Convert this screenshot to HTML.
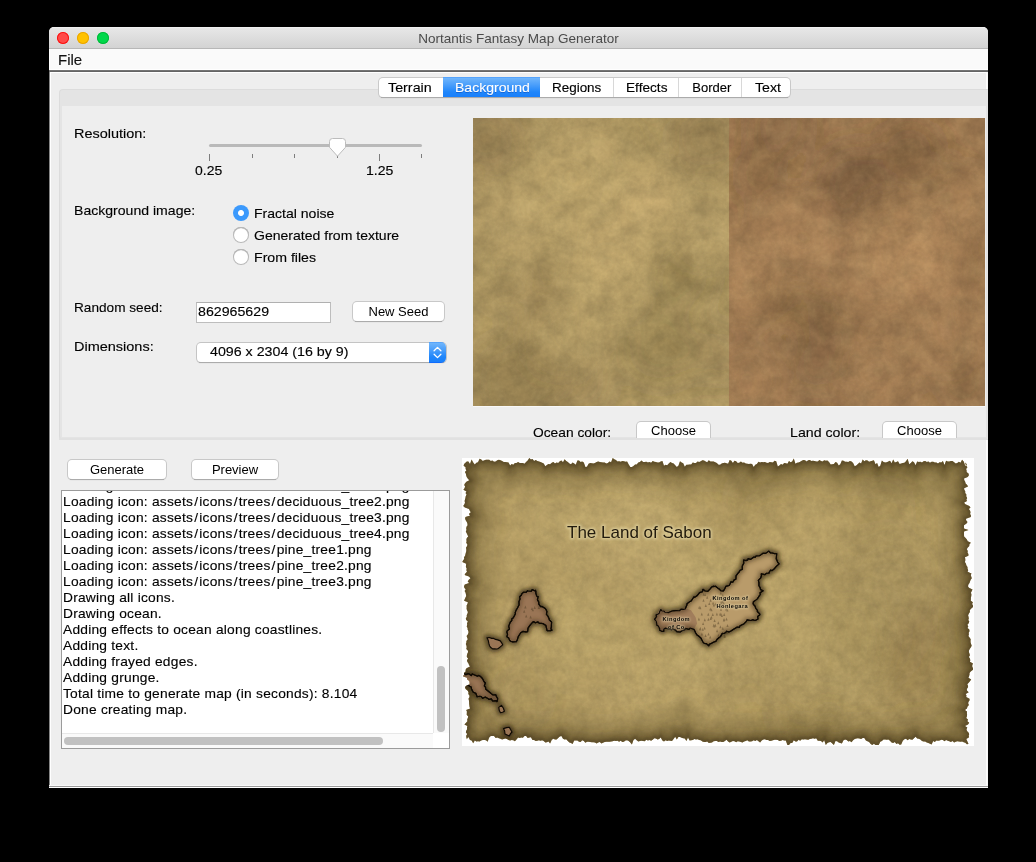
<!DOCTYPE html>
<html><head><meta charset="utf-8"><title>Nortantis Fantasy Map Generator</title>
<style>
*{margin:0;padding:0;box-sizing:border-box}
html,body{width:1036px;height:862px;background:#000;overflow:hidden}
body{font-family:"Liberation Sans",sans-serif;font-size:13px;color:#000;position:relative}
.lbl,.tab,#file,.ln{-webkit-text-stroke:0.13px currentColor}
.btn,.tab,#title,#file,.lbl,#logtxt{will-change:transform}
.abs{position:absolute}
#win{position:absolute;left:49px;top:27px;width:939px;height:761px;background:#eeeeee;border-radius:5px 5px 0 0;overflow:hidden}
#titlebar{position:absolute;left:0;top:0;width:939px;height:22px;background:linear-gradient(#f6f6f6 0,#e9e9e9 1px,#e6e6e6 2px,#d3d3d3 21px);border-bottom:1px solid #b7b7b7}
#title{position:absolute;left:0;width:939px;top:4px;text-align:center;font-size:13px;line-height:16px;color:#4a4a4a}
.tl{position:absolute;top:5px;width:12px;height:12px;border-radius:50%}
#menubar{position:absolute;left:0;top:22px;width:939px;height:21px;background:#fafafa;border-left:1px solid #fff;border-bottom:1px solid #fff}
#file{position:absolute;left:8px;top:2px;font-size:14px;line-height:18px;color:#111;transform:scaleX(1.07);transform-origin:0 0}
#sep{position:absolute;left:0;top:43px;width:939px;height:2px;background:linear-gradient(#7c7c7c,#5c5c5c)}
#content{position:absolute;left:0;top:45px;width:939px;height:716px;background:#eeeeee;border-left:1px solid #858585}
#hl-top{position:absolute;left:1px;top:45px;width:938px;height:1px;background:#fff}
#hl-left{position:absolute;left:1px;top:45px;width:1px;height:716px;background:#fff}
#hl-right{position:absolute;left:937px;top:45px;width:2px;height:716px;background:linear-gradient(90deg,#fff,#f4f4f4)}
#bot1{position:absolute;left:0;top:758px;width:939px;height:1px;background:#f8f8f8}
#bot2{position:absolute;left:0;top:759px;width:939px;height:1px;background:#9a9a9a}
#bot3{position:absolute;left:0;top:760px;width:939px;height:1px;background:#fff}
/* tabbed pane */
#pane{position:absolute;left:10px;top:62px;width:930px;height:351px;background:#e4e4e4;border:1px solid #dcdcdc;border-radius:4px 0 0 4px;border-right:none}
#inner{position:absolute;left:13px;top:79px;width:924px;height:331px;background:#eeeeee}
#tabs{position:absolute;left:330px;top:51px;height:19px;width:411px;background:#fff;border-radius:4px;box-shadow:0 0 0 1px #c9c9c9,0 1px 1px 0 #b0b0b0}
.tab{position:absolute;top:0;height:19px;line-height:19px;text-align:left;font-size:13px;border-left:1px solid #d8d8d8}
.tab.first{border-left:none}
.tab.sel{background:linear-gradient(#4a9bfb 0,#6db4fc 1.5px,#4a9efb 8px,#1f86fb 15px,#1a80fb 19.5px,#0a62fe 21px);color:#fff;text-shadow:0 1px 0 rgba(0,40,140,.35);border-left:none;top:-1px;height:21px;line-height:21px}
.lbl{position:absolute;white-space:nowrap;line-height:16px;font-size:13px;transform-origin:0 0}
.tab span{position:absolute;top:0;transform-origin:0 0;white-space:nowrap}
.btn{position:absolute;height:20px;background:#fff;border-radius:4px;box-shadow:0 0 0 1px #c8c8c8, 0 1px 1px 0 #b0b0b0;text-align:center;line-height:19px;font-size:13px;white-space:nowrap}
.radio{position:absolute;width:16px;height:16px;border-radius:50%;background:#fff;box-shadow:inset 0 0 0 1px #b8b8b8, inset 0 1px 1px #9a9a9a}
.radio.on{background:radial-gradient(circle,#fff 0,#fff 2.5px,#3b99fc 3.5px,#3b99fc 100%);box-shadow:none}
.btn::after,#tabs::after,#combo::after{content:"";position:absolute;left:2px;right:2px;bottom:-1px;height:1px;background:#ababab}
.btn.flat::after{display:none}
/* log */
#log{position:absolute;left:12px;top:463px;width:389px;height:259px;background:#fff;border:1px solid #9b9b9b;overflow:hidden}
#logtxt{position:absolute;left:0.8px;top:-13px;font-size:13px;transform:scaleX(1.06);transform-origin:0 0}
.ln{height:16px;line-height:16px;white-space:nowrap;letter-spacing:0.21px}
.ln i{font-style:normal;margin:0 1px}
#vsb{position:absolute;left:371px;top:0;width:16px;height:242px;background:#fafafa;border-left:1px solid #e8e8e8}
#vth{position:absolute;left:3px;top:175px;width:8px;height:66px;border-radius:4px;background:#c1c1c1}
#hsb{position:absolute;left:0;top:242px;width:371px;height:15px;background:#fafafa;border-top:1px solid #e8e8e8}
#hth{position:absolute;left:2px;top:3px;width:319px;height:8px;border-radius:4px;background:#c1c1c1}
</style></head><body>
<div id="win">
 <div id="titlebar">
  <div class="tl" style="left:8px;background:#ff4a48;box-shadow:inset 0 0 0 1px #fb1010"></div>
  <div class="tl" style="left:28px;background:#ffc200;box-shadow:inset 0 0 0 1px #eaa500"></div>
  <div class="tl" style="left:48px;background:#00d84a;box-shadow:inset 0 0 0 1px #00b83a"></div>
  <div id="title"><span style="display:inline-block;transform:scaleX(1.04)">Nortantis Fantasy Map Generator</span></div>
 </div>
 <div id="menubar"><div id="file">File</div></div>
 <div id="sep"></div>
 <div id="content"></div>
 <div id="hl-top"></div><div id="hl-left"></div><div id="hl-right"></div>
 <div id="bot1"></div><div id="bot2"></div><div id="bot3"></div>

 <div id="pane"></div>
 <div id="inner"></div>
 <div id="tabs">
  <div class="tab first" style="left:0px;width:64px"><span style="left:8.7px;transform:scaleX(1.1)">Terrain</span></div>
  <div class="tab sel" style="left:64px;width:97px"><span style="left:12.2px;transform:scaleX(1.08)">Background</span></div>
  <div class="tab first" style="left:161px;width:73px"><span style="left:12.2px;transform:scaleX(1.034)">Regions</span></div>
  <div class="tab " style="left:234px;width:65px"><span style="left:12.4px;transform:scaleX(1.05)">Effects</span></div>
  <div class="tab " style="left:299px;width:63px"><span style="left:13.3px;transform:scaleX(1.0)">Border</span></div>
  <div class="tab " style="left:362px;width:49px"><span style="left:12.8px;transform:scaleX(1.09)">Text</span></div>
 </div>

 <!-- left form -->
 <div class="lbl" id="l-res" style="left:25px;top:99px;transform:scaleX(1.111)">Resolution:</div>
 <div class="lbl" id="l-bg" style="left:25px;top:176px;transform:scaleX(1.082)">Background image:</div>
 <div class="lbl" id="l-seed" style="left:25px;top:273px;transform:scaleX(1.048)">Random seed:</div>
 <div class="lbl" id="l-dim" style="left:25px;top:312px;transform:scaleX(1.114)">Dimensions:</div>

 <!-- slider -->
 <div class="abs" style="left:160px;top:117px;width:213px;height:3px;border-radius:2px;background:#b9b9b9"></div>
 <svg class="abs" style="left:150px;top:108px" width="240" height="30" viewBox="0 0 240 30">
  <g stroke="#7d7d7d" stroke-width="1">
   <path d="M10.5 19v7M180.5 19v7" />
   <path d="M53.5 19v4M95.5 19v4M138.5 19v4M222.5 19v4" />
  </g>
  <path d="M130.5 6.5 q0 -3 3 -3 h10 q3 0 3 3 v5.8 l-8 8.9 l-8 -8.9z" fill="#fff" stroke="#bcbcbc" stroke-width="1"/>
 </svg>
 <div class="lbl" id="l-025" style="left:145.6px;top:136px;transform:scaleX(1.075)">0.25</div>
 <div class="lbl" id="l-125" style="left:316.6px;top:136px;transform:scaleX(1.083)">1.25</div>

 <!-- radios -->
 <div class="radio on" style="left:184px;top:178px"></div>
 <div class="radio" style="left:184px;top:200px"></div>
 <div class="radio" style="left:184px;top:222px"></div>
 <div class="lbl" id="l-r1" style="left:204.8px;top:179px;transform:scaleX(1.08)">Fractal noise</div>
 <div class="lbl" id="l-r2" style="left:205px;top:201px;transform:scaleX(1.08)">Generated from texture</div>
 <div class="lbl" id="l-r3" style="left:204.8px;top:223px;transform:scaleX(1.0875)">From files</div>

 <!-- seed -->
 <div class="abs" id="seedbox" style="left:147px;top:275px;width:135px;height:21px;background:#fff;border:1px solid #bdbdbd;border-top-color:#b0b0b0"></div>
 <div class="lbl" id="l-seedv" style="left:149.2px;top:277px;transform:scaleX(1.092)">862965629</div>
 <div class="btn" id="b-seed" style="left:304px;top:275px;width:91px;height:19px">New Seed</div>

 <!-- combo -->
 <div class="abs" id="combo" style="left:148px;top:316px;width:249px;height:19px;background:#fff;border-radius:4px;box-shadow:0 0 0 1px #c4c4c4,0 1px 1px 0 #aeaeae"></div>
 <div class="abs" style="left:380px;top:315px;width:17px;height:21px;border-radius:0 5px 5px 0;background:linear-gradient(#4a9bfb 0,#6db4fc 1.5px,#4a9efb 8px,#1f86fb 15px,#1a80fb 19.5px,#0a62fe 21px)">
   <svg class="abs" style="left:0;top:0" width="17" height="21" viewBox="0 0 17 21"><path d="M5.1 8.7 L8.5 5.4 L11.9 8.7 M5.1 12.3 L8.5 15.6 L11.9 12.3" fill="none" stroke="#fff" stroke-width="1.3" stroke-linecap="round" stroke-linejoin="round"/></svg>
 </div>
 <div class="lbl" id="l-combo" style="left:161px;top:317px;transform:scaleX(1.095)">4096 x 2304 (16 by 9)</div>

 <!-- preview image -->
 <svg class="abs" id="bgprev" style="left:424px;top:91px" width="512" height="288" viewBox="0 0 512 288">
  <defs>
   <filter id="nz" x="0" y="0" width="100%" height="100%" color-interpolation-filters="sRGB">
    <feTurbulence type="fractalNoise" baseFrequency="0.05" numOctaves="5" seed="11"/>
    <feColorMatrix type="matrix" values="0 0 0 0 0  0 0 0 0 0  0 0 0 0 0  1.8 0 0 0 -0.55"/>
   </filter>
   <filter id="nz2" x="0" y="0" width="100%" height="100%" color-interpolation-filters="sRGB">
    <feTurbulence type="fractalNoise" baseFrequency="0.05" numOctaves="5" seed="4"/>
    <feColorMatrix type="matrix" values="0 0 0 0 1  0 0 0 0 0.92  0 0 0 0 0.65  1.8 0 0 0 -0.55"/>
   </filter>
   <filter id="nzf" x="0" y="0" width="100%" height="100%" color-interpolation-filters="sRGB">
    <feTurbulence type="fractalNoise" baseFrequency="0.22" numOctaves="2" seed="5"/>
    <feColorMatrix type="matrix" values="0 0 0 0 0  0 0 0 0 0  0 0 0 0 0  2.2 0 0 0 -0.75"/>
   </filter>
   <filter id="bb" x="-30%" y="-30%" width="160%" height="160%"><feGaussianBlur stdDeviation="14"/></filter>
   <clipPath id="cl"><rect x="0" y="0" width="256" height="288"/></clipPath>
   <clipPath id="cr"><rect x="0" y="0" width="256" height="288"/></clipPath>
  </defs>
  <rect x="0" y="0" width="256" height="288" fill="#b49c65"/>
  <rect x="256" y="0" width="256" height="288" fill="#a47d54"/>
  <g clip-path="url(#cl)"><g filter="url(#bb)"><circle cx="177" cy="80" r="26" fill="#dfc080" opacity="0.60"/><circle cx="117" cy="40" r="45" fill="#dfc080" opacity="0.30"/><circle cx="134" cy="127" r="40" fill="#dfc080" opacity="0.36"/><circle cx="43" cy="100" r="35" fill="#dfc080" opacity="0.24"/><circle cx="90" cy="217" r="35" fill="#dfc080" opacity="0.21"/><circle cx="234" cy="110" r="30" fill="#dfc080" opacity="0.24"/><circle cx="134" cy="167" r="35" fill="#dfc080" opacity="0.21"/><circle cx="84" cy="77" r="35" fill="#dfc080" opacity="0.21"/><circle cx="30" cy="157" r="25" fill="#dfc080" opacity="0.18"/><circle cx="13" cy="20" r="40" fill="#6f5b33" opacity="0.29"/><circle cx="234" cy="20" r="42" fill="#6f5b33" opacity="0.29"/><circle cx="43" cy="267" r="50" fill="#6f5b33" opacity="0.34"/><circle cx="207" cy="160" r="36" fill="#6f5b33" opacity="0.25"/><circle cx="187" cy="231" r="40" fill="#6f5b33" opacity="0.25"/><circle cx="60" cy="180" r="32" fill="#6f5b33" opacity="0.21"/><circle cx="10" cy="147" r="25" fill="#6f5b33" opacity="0.13"/><circle cx="247" cy="234" r="30" fill="#6f5b33" opacity="0.17"/><circle cx="110" cy="267" r="30" fill="#6f5b33" opacity="0.17"/><circle cx="160" cy="10" r="25" fill="#6f5b33" opacity="0.13"/></g></g>
  <g transform="translate(256 0)"><g clip-path="url(#cr)"><g filter="url(#bb)"><circle cx="127" cy="67" r="40" fill="#5d452b" opacity="0.42"/><circle cx="180" cy="30" r="30" fill="#5d452b" opacity="0.34"/><circle cx="50" cy="7" r="30" fill="#5d452b" opacity="0.29"/><circle cx="30" cy="57" r="28" fill="#5d452b" opacity="0.21"/><circle cx="47" cy="180" r="28" fill="#5d452b" opacity="0.23"/><circle cx="90" cy="187" r="32" fill="#5d452b" opacity="0.21"/><circle cx="100" cy="217" r="28" fill="#5d452b" opacity="0.19"/><circle cx="247" cy="144" r="24" fill="#5d452b" opacity="0.21"/><circle cx="87" cy="251" r="28" fill="#5d452b" opacity="0.25"/><circle cx="207" cy="60" r="28" fill="#5d452b" opacity="0.17"/><circle cx="160" cy="100" r="25" fill="#5d452b" opacity="0.13"/><circle cx="234" cy="267" r="30" fill="#5d452b" opacity="0.17"/><circle cx="20" cy="227" r="25" fill="#5d452b" opacity="0.13"/><circle cx="13" cy="164" r="32" fill="#c99a69" opacity="0.44"/><circle cx="67" cy="114" r="32" fill="#c99a69" opacity="0.39"/><circle cx="174" cy="127" r="45" fill="#c99a69" opacity="0.44"/><circle cx="201" cy="157" r="35" fill="#c99a69" opacity="0.33"/><circle cx="234" cy="84" r="28" fill="#c99a69" opacity="0.22"/><circle cx="150" cy="254" r="30" fill="#c99a69" opacity="0.22"/><circle cx="17" cy="267" r="28" fill="#c99a69" opacity="0.28"/><circle cx="217" cy="217" r="30" fill="#c99a69" opacity="0.22"/><circle cx="100" cy="140" r="30" fill="#c99a69" opacity="0.22"/><circle cx="140" cy="174" r="28" fill="#c99a69" opacity="0.22"/></g></g></g>
  <rect x="0" y="0" width="512" height="288" filter="url(#nz)" opacity="0.13"/>
  <rect x="0" y="0" width="512" height="288" filter="url(#nz2)" opacity="0.10"/>
  <rect x="0" y="0" width="512" height="288" filter="url(#nzf)" opacity="0.04"/>
 </svg>
 <div class="abs" style="left:424px;top:379px;width:512px;height:1px;background:#f8f8f8"></div>

 <div class="lbl" id="l-ocean" style="left:484.2px;top:398px;transform:scaleX(1.06)">Ocean color:</div>
 <div class="btn flat" id="b-oc" style="left:588px;top:395px;width:73px;height:16px;line-height:17px;border-radius:4px 4px 0 0;box-shadow:0 0 0 1px #c8c8c8">Choose</div>
 <div class="lbl" id="l-land" style="left:741px;top:398px;transform:scaleX(1.09)">Land color:</div>
 <div class="btn flat" id="b-lc" style="left:834px;top:395px;width:73px;height:16px;line-height:17px;border-radius:4px 4px 0 0;box-shadow:0 0 0 1px #c8c8c8">Choose</div>
 <div class="abs" style="left:10px;top:411px;width:928px;height:2px;background:#e1e1e1"></div>

 <!-- buttons -->
 <div class="btn" id="b-gen" style="left:19px;top:433px;width:98px;height:19px">Generate</div>
 <div class="btn" id="b-prev" style="left:143px;top:433px;width:86px;height:19px">Preview</div>

 <!-- log -->
 <div id="log">
  <div id="logtxt">
<div class="ln">Loading icon: assets<i>/</i>icons<i>/</i>trees<i>/</i>deciduous_tree1.png</div>
<div class="ln">Loading icon: assets<i>/</i>icons<i>/</i>trees<i>/</i>deciduous_tree2.png</div>
<div class="ln">Loading icon: assets<i>/</i>icons<i>/</i>trees<i>/</i>deciduous_tree3.png</div>
<div class="ln">Loading icon: assets<i>/</i>icons<i>/</i>trees<i>/</i>deciduous_tree4.png</div>
<div class="ln">Loading icon: assets<i>/</i>icons<i>/</i>trees<i>/</i>pine_tree1.png</div>
<div class="ln">Loading icon: assets<i>/</i>icons<i>/</i>trees<i>/</i>pine_tree2.png</div>
<div class="ln">Loading icon: assets<i>/</i>icons<i>/</i>trees<i>/</i>pine_tree3.png</div>
<div class="ln">Drawing all icons.</div>
<div class="ln">Drawing ocean.</div>
<div class="ln">Adding effects to ocean along coastlines.</div>
<div class="ln">Adding text.</div>
<div class="ln">Adding frayed edges.</div>
<div class="ln">Adding grunge.</div>
<div class="ln">Total time to generate map (in seconds): 8.104</div>
<div class="ln">Done creating map.</div>
  </div>
  <div id="vsb"><div id="vth"></div></div>
  <div id="hsb"><div id="hth"></div></div>
  <div class="abs" style="left:371px;top:242px;width:16px;height:15px;background:#fff"></div>
 </div>


 <!-- map -->
 <svg class="abs" id="map" style="left:413px;top:431px" width="512" height="288" viewBox="0 0 512 288">
  <defs>
   <clipPath id="jag"><polygon points="4.8,3.5 6.4,3.5 8.0,6.1 9.6,1.4 11.2,4.5 12.8,6.4 14.4,4.8 16.0,4.3 17.6,0.7 19.2,1.6 20.8,3.1 22.4,2.2 24.0,1.7 25.6,1.8 27.2,1.8 28.8,3.0 30.4,2.4 32.0,3.7 33.7,3.5 35.3,2.2 36.9,1.7 38.5,2.2 40.1,3.1 41.7,4.1 43.3,4.0 44.9,4.3 46.5,4.4 48.1,7.4 49.7,5.9 51.3,6.7 52.9,5.0 54.5,4.9 56.1,3.9 57.7,5.0 59.3,4.9 60.9,5.1 62.5,5.7 64.1,4.1 65.7,2.6 67.3,0.0 68.9,1.4 70.5,1.0 72.1,2.9 73.7,2.1 75.3,2.9 76.9,3.5 78.5,4.0 80.1,4.7 81.7,5.5 83.3,8.2 84.9,6.9 86.5,6.1 88.1,6.3 89.8,4.7 91.4,4.1 93.0,5.5 94.6,4.4 96.2,5.0 97.8,3.3 99.4,2.6 101.0,4.2 102.6,1.3 104.2,3.1 105.8,4.0 107.4,5.5 109.0,6.2 110.6,4.5 112.2,5.6 113.8,6.7 115.4,2.5 117.0,2.5 118.6,4.0 120.2,3.4 121.8,4.5 123.4,9.0 125.0,8.8 126.6,5.8 128.2,5.0 129.8,5.2 131.4,5.4 133.0,5.0 134.6,4.1 136.2,3.4 137.8,3.9 139.4,4.2 141.0,4.4 142.6,4.5 144.3,5.4 145.9,5.1 147.5,3.5 149.1,4.3 150.7,0.0 152.3,1.3 153.9,2.0 155.5,3.4 157.1,3.2 158.7,3.8 160.3,3.1 161.9,3.3 163.5,3.7 165.1,3.4 166.7,6.6 168.3,9.0 169.9,9.0 171.5,8.0 173.1,6.4 174.7,6.6 176.3,4.5 177.9,3.9 179.5,2.5 181.1,3.9 182.7,4.0 184.3,3.8 185.9,4.6 187.5,4.1 189.1,4.7 190.7,2.9 192.3,3.7 193.9,4.1 195.5,4.4 197.1,4.4 198.7,3.5 200.4,3.1 202.0,7.7 203.6,6.8 205.2,7.3 206.8,5.6 208.4,3.9 210.0,5.1 211.6,5.4 213.2,7.3 214.8,9.0 216.4,7.8 218.0,3.3 219.6,4.4 221.2,5.2 222.8,8.7 224.4,6.7 226.0,6.7 227.6,6.5 229.2,6.5 230.8,4.6 232.4,4.9 234.0,5.0 235.6,3.5 237.2,3.9 238.8,3.2 240.4,2.3 242.0,2.4 243.6,3.4 245.2,4.3 246.8,2.2 248.4,3.6 250.0,3.6 251.6,3.4 253.2,4.3 254.8,5.1 256.5,6.7 258.1,6.8 259.7,5.6 261.3,5.1 262.9,4.8 264.5,5.2 266.1,5.8 267.7,1.9 269.3,2.8 270.9,5.1 272.5,2.7 274.1,3.3 275.7,5.0 277.3,4.8 278.9,3.5 280.5,4.7 282.1,4.5 283.7,5.4 285.3,5.7 286.9,5.9 288.5,5.7 290.1,5.9 291.7,9.0 293.3,6.8 294.9,5.9 296.5,3.7 298.1,4.6 299.7,4.1 301.3,4.2 302.9,4.1 304.5,4.7 306.1,4.9 307.7,4.1 309.3,4.3 310.9,4.6 312.6,2.7 314.2,3.2 315.8,8.4 317.4,7.6 319.0,6.1 320.6,6.7 322.2,5.0 323.8,5.3 325.4,5.7 327.0,3.0 328.6,4.2 330.2,3.5 331.8,0.4 333.4,5.7 335.0,4.7 336.6,4.4 338.2,3.7 339.8,2.7 341.4,2.1 343.0,2.2 344.6,3.4 346.2,2.3 347.8,2.1 349.4,3.1 351.0,2.8 352.6,3.1 354.2,3.6 355.8,3.6 357.4,2.1 359.0,3.0 360.6,3.6 362.2,2.3 363.8,2.7 365.4,2.4 367.0,4.1 368.7,6.5 370.3,6.3 371.9,6.0 373.5,4.1 375.1,4.7 376.7,7.6 378.3,6.2 379.9,2.5 381.5,2.8 383.1,3.8 384.7,3.7 386.3,4.0 387.9,3.0 389.5,3.5 391.1,5.0 392.7,8.2 394.3,7.5 395.9,6.1 397.5,4.5 399.1,5.4 400.7,1.5 402.3,3.3 403.9,2.3 405.5,2.5 407.1,3.8 408.7,3.2 410.3,2.7 411.9,2.2 413.5,6.3 415.1,5.0 416.7,9.0 418.3,7.8 419.9,2.6 421.5,3.9 423.2,4.4 424.8,4.2 426.4,3.6 428.0,2.8 429.6,5.3 431.2,1.4 432.8,4.4 434.4,4.0 436.0,3.2 437.6,6.1 439.2,5.6 440.8,4.9 442.4,4.8 444.0,3.2 445.6,0.8 447.2,6.3 448.8,4.9 450.4,3.2 452.0,4.2 453.6,7.3 455.2,3.4 456.8,4.1 458.4,3.8 460.0,4.5 461.6,3.2 463.2,2.9 464.8,3.9 466.4,3.6 468.0,4.7 469.6,3.8 471.2,3.8 472.8,4.6 474.4,4.6 476.0,5.4 477.6,4.3 479.3,4.5 480.9,3.0 482.5,6.9 484.1,2.7 485.7,3.5 487.3,3.4 488.9,3.1 490.5,3.1 492.1,4.2 493.7,5.4 495.3,5.1 496.9,3.8 498.5,4.8 500.1,1.8 501.7,3.4 503.3,8.1 504.9,6.6 503.4,4.5 503.4,6.1 504.4,7.7 505.4,9.3 504.1,10.9 504.6,12.5 504.6,14.1 506.7,15.7 506.8,17.4 505.7,19.0 502.0,20.6 502.3,22.2 503.2,23.8 503.6,25.4 505.2,27.0 506.0,28.6 502.1,30.2 502.3,31.8 503.3,33.4 503.2,35.0 504.4,36.6 504.2,38.2 505.2,39.9 504.4,41.5 505.0,43.1 502.0,44.7 503.4,46.3 507.3,47.9 508.5,49.5 506.9,51.1 508.1,52.7 508.5,54.3 508.1,55.9 509.0,57.5 508.8,59.1 504.0,60.7 504.1,62.3 505.5,64.0 504.5,65.6 502.0,67.2 502.0,68.8 502.0,70.4 506.5,72.0 502.0,73.6 502.0,75.2 502.0,76.8 502.1,78.4 503.6,80.0 504.9,81.6 505.7,83.2 508.9,84.8 507.3,86.5 507.3,88.1 505.6,89.7 504.8,91.3 505.8,92.9 505.5,94.5 506.4,96.1 506.4,97.7 502.9,99.3 503.3,100.9 503.3,102.5 502.9,104.1 504.0,105.7 504.3,107.3 505.5,109.0 505.5,110.6 506.2,112.2 505.6,113.8 509.5,115.4 508.8,117.0 509.2,118.6 509.8,120.2 508.7,121.8 508.0,123.4 507.5,125.0 506.4,126.6 506.0,128.2 506.9,129.8 510.5,131.4 509.8,133.1 508.9,134.7 509.4,136.3 509.3,137.9 508.9,139.5 508.9,141.1 508.8,142.7 510.9,144.3 510.1,145.9 511.0,147.5 511.0,149.1 509.0,150.7 507.8,152.3 507.9,153.9 506.9,155.6 506.1,157.2 506.5,158.8 506.8,160.4 506.3,162.0 507.3,163.6 506.7,165.2 505.4,166.8 506.3,168.4 505.5,170.0 507.3,171.6 507.5,173.2 506.7,174.8 506.9,176.4 506.4,178.0 507.7,179.7 508.7,181.3 508.5,182.9 508.6,184.5 509.1,186.1 509.7,187.7 508.9,189.3 507.7,190.9 507.0,192.5 506.9,194.1 507.5,195.7 507.9,197.3 506.9,198.9 507.9,200.5 508.3,202.2 507.9,203.8 511.0,205.4 510.3,207.0 510.2,208.6 511.0,210.2 511.0,211.8 508.7,213.4 507.5,215.0 507.5,216.6 507.1,218.2 506.4,219.8 509.2,221.4 508.1,223.0 506.7,224.7 505.3,226.3 506.1,227.9 505.9,229.5 504.8,231.1 505.1,232.7 506.7,234.3 503.7,235.9 504.5,237.5 504.2,239.1 507.5,240.7 507.6,242.3 506.4,243.9 506.2,245.5 506.9,247.1 505.4,248.8 505.0,250.4 502.9,252.0 505.0,253.6 504.9,255.2 505.1,256.8 504.9,258.4 504.2,260.0 506.0,261.6 505.4,263.2 507.2,264.8 506.0,266.4 503.0,268.0 505.3,269.6 504.5,271.3 505.0,272.9 506.5,274.5 507.2,276.1 506.7,277.7 507.1,279.3 504.3,280.9 506.5,286.0 504.9,286.2 503.3,284.8 501.7,284.3 500.1,283.4 498.5,283.7 496.9,283.6 495.3,283.3 493.7,283.8 492.1,284.6 490.5,282.9 488.9,284.1 487.3,283.3 485.7,282.8 484.1,282.0 482.5,283.2 480.9,282.0 479.3,281.8 477.6,282.5 476.0,282.8 474.4,282.6 472.8,284.1 471.2,283.1 469.6,286.5 468.0,285.8 466.4,284.9 464.8,284.6 463.2,283.4 461.6,283.4 460.0,283.0 458.4,281.5 456.8,280.7 455.2,280.6 453.6,278.7 452.0,280.3 450.4,281.8 448.8,281.5 447.2,280.9 445.6,282.3 444.0,280.7 442.4,281.2 440.8,282.7 439.2,286.6 437.6,286.7 436.0,285.3 434.4,286.1 432.8,284.1 431.2,285.0 429.6,284.6 428.0,282.7 426.4,281.5 424.8,281.7 423.2,281.6 421.5,281.4 419.9,282.9 418.3,283.8 416.7,287.0 415.1,287.0 413.5,287.0 411.9,285.8 410.3,286.9 408.7,286.0 407.1,283.9 405.5,283.2 403.9,282.5 402.3,280.0 400.7,280.0 399.1,281.0 397.5,280.6 395.9,280.2 394.3,280.5 392.7,281.1 391.1,282.2 389.5,284.2 387.9,282.9 386.3,283.5 384.7,281.9 383.1,281.5 381.5,282.3 379.9,285.4 378.3,285.0 376.7,284.5 375.1,283.3 373.5,283.1 371.9,287.0 370.3,285.6 368.7,284.1 367.0,284.2 365.4,284.9 363.8,287.0 362.2,282.2 360.6,284.4 359.0,283.1 357.4,282.7 355.8,282.8 354.2,280.3 352.6,280.8 351.0,280.2 349.4,280.8 347.8,281.0 346.2,281.8 344.6,281.5 343.0,281.3 341.4,281.4 339.8,281.3 338.2,282.7 336.6,281.8 335.0,283.5 333.4,283.5 331.8,282.3 330.2,284.9 328.6,284.9 327.0,287.0 325.4,287.0 323.8,282.4 322.2,282.4 320.6,281.9 319.0,282.8 317.4,283.0 315.8,281.9 314.2,281.7 312.6,281.8 310.9,282.3 309.3,282.7 307.7,282.9 306.1,282.0 304.5,281.9 302.9,281.2 301.3,281.4 299.7,282.5 298.1,284.6 296.5,283.2 294.9,282.0 293.3,283.0 291.7,282.3 290.1,283.2 288.5,283.6 286.9,283.4 285.3,282.3 283.7,282.9 282.1,283.5 280.5,284.5 278.9,284.0 277.3,283.4 275.7,283.2 274.1,284.3 272.5,283.2 270.9,283.1 269.3,283.7 267.7,284.5 266.1,283.6 264.5,281.8 262.9,282.9 261.3,284.0 259.7,284.0 258.1,283.6 256.5,284.0 254.8,282.9 253.2,283.0 251.6,283.2 250.0,284.4 248.4,284.7 246.8,285.1 245.2,283.4 243.6,284.1 242.0,283.9 240.4,283.5 238.8,282.2 237.2,282.1 235.6,281.3 234.0,281.5 232.4,281.0 230.8,282.0 229.2,282.3 227.6,282.6 226.0,279.4 224.4,283.0 222.8,280.4 221.2,280.3 219.6,279.8 218.0,279.1 216.4,279.1 214.8,281.4 213.2,278.7 211.6,281.1 210.0,282.9 208.4,282.8 206.8,282.5 205.2,283.1 203.6,282.3 202.0,283.5 200.4,282.5 198.7,279.5 197.1,281.1 195.5,281.4 193.9,280.6 192.3,280.2 190.7,281.7 189.1,282.7 187.5,281.9 185.9,282.4 184.3,281.8 182.7,283.3 181.1,283.1 179.5,282.8 177.9,283.1 176.3,283.4 174.7,282.2 173.1,280.8 171.5,282.0 169.9,286.4 168.3,284.6 166.7,283.1 165.1,282.3 163.5,282.5 161.9,283.8 160.3,283.9 158.7,282.7 157.1,283.8 155.5,282.8 153.9,282.9 152.3,282.7 150.7,283.3 149.1,283.4 147.5,283.8 145.9,283.7 144.3,283.8 142.6,283.9 141.0,284.8 139.4,285.6 137.8,284.0 136.2,284.5 134.6,285.4 133.0,284.4 131.4,284.2 129.8,284.2 128.2,284.0 126.6,283.8 125.0,283.7 123.4,284.7 121.8,283.1 120.2,282.3 118.6,284.0 117.0,283.7 115.4,282.4 113.8,282.5 112.2,282.6 110.6,286.1 109.0,285.0 107.4,284.6 105.8,282.9 104.2,281.2 102.6,281.5 101.0,280.7 99.4,278.0 97.8,278.6 96.2,279.9 94.6,281.6 93.0,281.5 91.4,280.7 89.8,281.7 88.1,285.6 86.5,283.5 84.9,284.3 83.3,284.6 81.7,282.9 80.1,282.2 78.5,282.8 76.9,282.2 75.3,282.8 73.7,283.0 72.1,281.9 70.5,282.0 68.9,279.3 67.3,279.4 65.7,279.9 64.1,278.0 62.5,278.0 60.9,279.7 59.3,279.5 57.7,279.9 56.1,279.6 54.5,281.6 52.9,283.2 51.3,282.2 49.7,281.9 48.1,282.5 46.5,282.0 44.9,281.1 43.3,280.4 41.7,281.1 40.1,281.6 38.5,280.7 36.9,280.2 35.3,279.6 33.7,280.0 32.0,278.0 30.4,278.0 28.8,278.1 27.2,279.6 25.6,283.7 24.0,282.2 22.4,281.9 20.8,282.1 19.2,282.6 17.6,283.4 16.0,283.2 14.4,283.5 12.8,282.4 11.2,285.3 9.6,282.6 8.0,282.1 6.4,279.1 3.7,282.5 4.8,280.9 4.3,279.3 4.2,277.7 5.2,276.1 3.9,274.5 4.1,272.9 5.1,271.3 5.0,269.6 5.4,268.0 2.4,266.4 4.1,264.8 5.4,263.2 5.2,261.6 5.8,260.0 6.2,258.4 4.7,256.8 4.8,255.2 4.9,253.6 4.2,252.0 8.1,250.4 7.5,248.8 7.3,247.1 7.1,245.5 7.1,243.9 6.9,242.3 6.5,240.7 7.5,239.1 7.4,237.5 6.3,235.9 6.5,234.3 5.7,232.7 3.6,231.1 3.0,229.5 3.7,227.9 7.6,226.3 7.6,224.7 7.3,223.0 5.2,221.4 4.9,219.8 0.8,218.2 2.3,216.6 1.9,215.0 3.6,213.4 3.6,211.8 4.5,210.2 8.0,208.6 7.0,207.0 6.5,205.4 5.3,203.8 5.0,202.2 6.1,200.5 4.8,198.9 4.9,197.3 5.3,195.7 6.1,194.1 5.8,192.5 4.3,190.9 4.7,189.3 4.5,187.7 3.8,186.1 4.4,184.5 4.4,182.9 5.8,181.3 5.2,179.7 4.6,178.0 5.8,176.4 6.5,174.8 6.4,173.2 5.6,171.6 5.6,170.0 4.7,168.4 5.2,166.8 5.0,165.2 5.9,163.6 4.2,162.0 3.8,160.4 4.8,158.8 4.7,157.2 5.5,155.6 5.9,153.9 5.0,152.3 4.6,150.7 4.7,149.1 4.6,147.5 5.4,145.9 5.9,144.3 2.1,142.7 2.8,141.1 3.5,139.5 4.2,137.9 3.9,136.3 3.6,134.7 2.6,133.1 3.7,131.4 2.3,129.8 2.0,128.2 2.8,126.6 7.1,125.0 5.7,123.4 6.8,121.8 8.5,120.2 6.9,118.6 2.6,117.0 3.3,115.4 5.0,113.8 4.4,112.2 4.7,110.6 3.9,109.0 4.0,107.3 4.2,105.7 0.3,104.1 1.0,102.5 2.2,100.9 2.0,99.3 3.1,97.7 3.5,96.1 3.9,94.5 4.3,92.9 4.3,91.3 4.0,89.7 5.1,88.1 5.4,86.5 4.2,84.8 4.6,83.2 4.4,81.6 4.8,80.0 6.2,78.4 5.4,76.8 4.7,75.2 3.8,73.6 4.5,72.0 4.2,70.4 4.5,68.8 5.6,67.2 5.4,65.6 4.8,64.0 3.7,62.3 3.1,60.7 3.4,59.1 8.2,57.5 6.8,55.9 8.8,54.3 7.8,52.7 7.0,51.1 2.9,49.5 1.2,47.9 2.4,46.3 3.0,44.7 2.6,43.1 3.0,41.5 3.4,39.9 3.7,38.2 4.6,36.6 3.5,35.0 4.5,33.4 1.4,31.8 2.5,30.2 3.1,28.6 2.2,27.0 2.9,25.4 4.4,23.8 7.3,22.2 5.7,20.6 4.7,19.0 4.2,17.4 3.9,15.7 2.9,14.1 4.4,12.5 3.6,10.9 3.6,9.3 1.6,7.7 2.1,6.1"/></clipPath>
   <filter id="blur12" x="-10%" y="-10%" width="120%" height="120%"><feGaussianBlur stdDeviation="9"/></filter>
   <filter id="blur4" x="-10%" y="-10%" width="120%" height="120%"><feGaussianBlur stdDeviation="3"/></filter>
   <filter id="blur3" x="-20%" y="-20%" width="140%" height="140%"><feGaussianBlur stdDeviation="2.2"/></filter>
   <filter id="blur1" x="-20%" y="-20%" width="140%" height="140%"><feGaussianBlur stdDeviation="1.2"/></filter>
   <filter id="mbb" x="-30%" y="-30%" width="160%" height="160%"><feGaussianBlur stdDeviation="16"/></filter>
   <filter id="mnz" x="0" y="0" width="100%" height="100%" color-interpolation-filters="sRGB">
    <feTurbulence type="fractalNoise" baseFrequency="0.07" numOctaves="5" seed="3"/>
    <feColorMatrix type="matrix" values="0 0 0 0 0  0 0 0 0 0  0 0 0 0 0  1.8 0 0 0 -0.55"/>
   </filter>
   <filter id="mnz2" x="0" y="0" width="100%" height="100%" color-interpolation-filters="sRGB">
    <feTurbulence type="fractalNoise" baseFrequency="0.07" numOctaves="5" seed="9"/>
    <feColorMatrix type="matrix" values="0 0 0 0 1  0 0 0 0 0.92  0 0 0 0 0.65  1.8 0 0 0 -0.55"/>
   </filter>
  </defs>
  <rect width="512" height="288" fill="#fff"/>
  <g clip-path="url(#jag)">
   <rect width="512" height="288" fill="#b8a066"/>
   <g filter="url(#mbb)"><circle cx="175" cy="75" r="55" fill="#d9c383" opacity="0.30"/><circle cx="250" cy="150" r="60" fill="#d9c383" opacity="0.25"/><circle cx="120" cy="170" r="45" fill="#d9c383" opacity="0.20"/><circle cx="370" cy="190" r="60" fill="#d9c383" opacity="0.25"/><circle cx="330" cy="90" r="50" fill="#d9c383" opacity="0.17"/><circle cx="430" cy="120" r="40" fill="#d9c383" opacity="0.15"/><circle cx="200" cy="230" r="50" fill="#d9c383" opacity="0.17"/><circle cx="90" cy="60" r="35" fill="#d9c383" opacity="0.15"/><circle cx="420" cy="150" r="70" fill="#6f5b33" opacity="0.20"/><circle cx="470" cy="200" r="50" fill="#6f5b33" opacity="0.18"/><circle cx="350" cy="250" r="50" fill="#6f5b33" opacity="0.14"/><circle cx="300" cy="40" r="40" fill="#6f5b33" opacity="0.14"/><circle cx="60" cy="240" r="35" fill="#6f5b33" opacity="0.14"/><circle cx="440" cy="230" r="40" fill="#6f5b33" opacity="0.14"/><circle cx="270" cy="215" r="30" fill="#6f5b33" opacity="0.11"/><circle cx="420" cy="50" r="35" fill="#6f5b33" opacity="0.14"/><circle cx="150" cy="120" r="25" fill="#6f5b33" opacity="0.09"/></g>
   <rect width="512" height="288" filter="url(#mnz)" opacity="0.085"/>
   <rect width="512" height="288" filter="url(#mnz2)" opacity="0.075"/>
   <rect width="512" height="288" filter="url(#nzf)" opacity="0.04"/>
   <!-- edge grunge -->
   <polygon points="4.8,3.5 6.4,3.5 8.0,6.1 9.6,1.4 11.2,4.5 12.8,6.4 14.4,4.8 16.0,4.3 17.6,0.7 19.2,1.6 20.8,3.1 22.4,2.2 24.0,1.7 25.6,1.8 27.2,1.8 28.8,3.0 30.4,2.4 32.0,3.7 33.7,3.5 35.3,2.2 36.9,1.7 38.5,2.2 40.1,3.1 41.7,4.1 43.3,4.0 44.9,4.3 46.5,4.4 48.1,7.4 49.7,5.9 51.3,6.7 52.9,5.0 54.5,4.9 56.1,3.9 57.7,5.0 59.3,4.9 60.9,5.1 62.5,5.7 64.1,4.1 65.7,2.6 67.3,0.0 68.9,1.4 70.5,1.0 72.1,2.9 73.7,2.1 75.3,2.9 76.9,3.5 78.5,4.0 80.1,4.7 81.7,5.5 83.3,8.2 84.9,6.9 86.5,6.1 88.1,6.3 89.8,4.7 91.4,4.1 93.0,5.5 94.6,4.4 96.2,5.0 97.8,3.3 99.4,2.6 101.0,4.2 102.6,1.3 104.2,3.1 105.8,4.0 107.4,5.5 109.0,6.2 110.6,4.5 112.2,5.6 113.8,6.7 115.4,2.5 117.0,2.5 118.6,4.0 120.2,3.4 121.8,4.5 123.4,9.0 125.0,8.8 126.6,5.8 128.2,5.0 129.8,5.2 131.4,5.4 133.0,5.0 134.6,4.1 136.2,3.4 137.8,3.9 139.4,4.2 141.0,4.4 142.6,4.5 144.3,5.4 145.9,5.1 147.5,3.5 149.1,4.3 150.7,0.0 152.3,1.3 153.9,2.0 155.5,3.4 157.1,3.2 158.7,3.8 160.3,3.1 161.9,3.3 163.5,3.7 165.1,3.4 166.7,6.6 168.3,9.0 169.9,9.0 171.5,8.0 173.1,6.4 174.7,6.6 176.3,4.5 177.9,3.9 179.5,2.5 181.1,3.9 182.7,4.0 184.3,3.8 185.9,4.6 187.5,4.1 189.1,4.7 190.7,2.9 192.3,3.7 193.9,4.1 195.5,4.4 197.1,4.4 198.7,3.5 200.4,3.1 202.0,7.7 203.6,6.8 205.2,7.3 206.8,5.6 208.4,3.9 210.0,5.1 211.6,5.4 213.2,7.3 214.8,9.0 216.4,7.8 218.0,3.3 219.6,4.4 221.2,5.2 222.8,8.7 224.4,6.7 226.0,6.7 227.6,6.5 229.2,6.5 230.8,4.6 232.4,4.9 234.0,5.0 235.6,3.5 237.2,3.9 238.8,3.2 240.4,2.3 242.0,2.4 243.6,3.4 245.2,4.3 246.8,2.2 248.4,3.6 250.0,3.6 251.6,3.4 253.2,4.3 254.8,5.1 256.5,6.7 258.1,6.8 259.7,5.6 261.3,5.1 262.9,4.8 264.5,5.2 266.1,5.8 267.7,1.9 269.3,2.8 270.9,5.1 272.5,2.7 274.1,3.3 275.7,5.0 277.3,4.8 278.9,3.5 280.5,4.7 282.1,4.5 283.7,5.4 285.3,5.7 286.9,5.9 288.5,5.7 290.1,5.9 291.7,9.0 293.3,6.8 294.9,5.9 296.5,3.7 298.1,4.6 299.7,4.1 301.3,4.2 302.9,4.1 304.5,4.7 306.1,4.9 307.7,4.1 309.3,4.3 310.9,4.6 312.6,2.7 314.2,3.2 315.8,8.4 317.4,7.6 319.0,6.1 320.6,6.7 322.2,5.0 323.8,5.3 325.4,5.7 327.0,3.0 328.6,4.2 330.2,3.5 331.8,0.4 333.4,5.7 335.0,4.7 336.6,4.4 338.2,3.7 339.8,2.7 341.4,2.1 343.0,2.2 344.6,3.4 346.2,2.3 347.8,2.1 349.4,3.1 351.0,2.8 352.6,3.1 354.2,3.6 355.8,3.6 357.4,2.1 359.0,3.0 360.6,3.6 362.2,2.3 363.8,2.7 365.4,2.4 367.0,4.1 368.7,6.5 370.3,6.3 371.9,6.0 373.5,4.1 375.1,4.7 376.7,7.6 378.3,6.2 379.9,2.5 381.5,2.8 383.1,3.8 384.7,3.7 386.3,4.0 387.9,3.0 389.5,3.5 391.1,5.0 392.7,8.2 394.3,7.5 395.9,6.1 397.5,4.5 399.1,5.4 400.7,1.5 402.3,3.3 403.9,2.3 405.5,2.5 407.1,3.8 408.7,3.2 410.3,2.7 411.9,2.2 413.5,6.3 415.1,5.0 416.7,9.0 418.3,7.8 419.9,2.6 421.5,3.9 423.2,4.4 424.8,4.2 426.4,3.6 428.0,2.8 429.6,5.3 431.2,1.4 432.8,4.4 434.4,4.0 436.0,3.2 437.6,6.1 439.2,5.6 440.8,4.9 442.4,4.8 444.0,3.2 445.6,0.8 447.2,6.3 448.8,4.9 450.4,3.2 452.0,4.2 453.6,7.3 455.2,3.4 456.8,4.1 458.4,3.8 460.0,4.5 461.6,3.2 463.2,2.9 464.8,3.9 466.4,3.6 468.0,4.7 469.6,3.8 471.2,3.8 472.8,4.6 474.4,4.6 476.0,5.4 477.6,4.3 479.3,4.5 480.9,3.0 482.5,6.9 484.1,2.7 485.7,3.5 487.3,3.4 488.9,3.1 490.5,3.1 492.1,4.2 493.7,5.4 495.3,5.1 496.9,3.8 498.5,4.8 500.1,1.8 501.7,3.4 503.3,8.1 504.9,6.6 503.4,4.5 503.4,6.1 504.4,7.7 505.4,9.3 504.1,10.9 504.6,12.5 504.6,14.1 506.7,15.7 506.8,17.4 505.7,19.0 502.0,20.6 502.3,22.2 503.2,23.8 503.6,25.4 505.2,27.0 506.0,28.6 502.1,30.2 502.3,31.8 503.3,33.4 503.2,35.0 504.4,36.6 504.2,38.2 505.2,39.9 504.4,41.5 505.0,43.1 502.0,44.7 503.4,46.3 507.3,47.9 508.5,49.5 506.9,51.1 508.1,52.7 508.5,54.3 508.1,55.9 509.0,57.5 508.8,59.1 504.0,60.7 504.1,62.3 505.5,64.0 504.5,65.6 502.0,67.2 502.0,68.8 502.0,70.4 506.5,72.0 502.0,73.6 502.0,75.2 502.0,76.8 502.1,78.4 503.6,80.0 504.9,81.6 505.7,83.2 508.9,84.8 507.3,86.5 507.3,88.1 505.6,89.7 504.8,91.3 505.8,92.9 505.5,94.5 506.4,96.1 506.4,97.7 502.9,99.3 503.3,100.9 503.3,102.5 502.9,104.1 504.0,105.7 504.3,107.3 505.5,109.0 505.5,110.6 506.2,112.2 505.6,113.8 509.5,115.4 508.8,117.0 509.2,118.6 509.8,120.2 508.7,121.8 508.0,123.4 507.5,125.0 506.4,126.6 506.0,128.2 506.9,129.8 510.5,131.4 509.8,133.1 508.9,134.7 509.4,136.3 509.3,137.9 508.9,139.5 508.9,141.1 508.8,142.7 510.9,144.3 510.1,145.9 511.0,147.5 511.0,149.1 509.0,150.7 507.8,152.3 507.9,153.9 506.9,155.6 506.1,157.2 506.5,158.8 506.8,160.4 506.3,162.0 507.3,163.6 506.7,165.2 505.4,166.8 506.3,168.4 505.5,170.0 507.3,171.6 507.5,173.2 506.7,174.8 506.9,176.4 506.4,178.0 507.7,179.7 508.7,181.3 508.5,182.9 508.6,184.5 509.1,186.1 509.7,187.7 508.9,189.3 507.7,190.9 507.0,192.5 506.9,194.1 507.5,195.7 507.9,197.3 506.9,198.9 507.9,200.5 508.3,202.2 507.9,203.8 511.0,205.4 510.3,207.0 510.2,208.6 511.0,210.2 511.0,211.8 508.7,213.4 507.5,215.0 507.5,216.6 507.1,218.2 506.4,219.8 509.2,221.4 508.1,223.0 506.7,224.7 505.3,226.3 506.1,227.9 505.9,229.5 504.8,231.1 505.1,232.7 506.7,234.3 503.7,235.9 504.5,237.5 504.2,239.1 507.5,240.7 507.6,242.3 506.4,243.9 506.2,245.5 506.9,247.1 505.4,248.8 505.0,250.4 502.9,252.0 505.0,253.6 504.9,255.2 505.1,256.8 504.9,258.4 504.2,260.0 506.0,261.6 505.4,263.2 507.2,264.8 506.0,266.4 503.0,268.0 505.3,269.6 504.5,271.3 505.0,272.9 506.5,274.5 507.2,276.1 506.7,277.7 507.1,279.3 504.3,280.9 506.5,286.0 504.9,286.2 503.3,284.8 501.7,284.3 500.1,283.4 498.5,283.7 496.9,283.6 495.3,283.3 493.7,283.8 492.1,284.6 490.5,282.9 488.9,284.1 487.3,283.3 485.7,282.8 484.1,282.0 482.5,283.2 480.9,282.0 479.3,281.8 477.6,282.5 476.0,282.8 474.4,282.6 472.8,284.1 471.2,283.1 469.6,286.5 468.0,285.8 466.4,284.9 464.8,284.6 463.2,283.4 461.6,283.4 460.0,283.0 458.4,281.5 456.8,280.7 455.2,280.6 453.6,278.7 452.0,280.3 450.4,281.8 448.8,281.5 447.2,280.9 445.6,282.3 444.0,280.7 442.4,281.2 440.8,282.7 439.2,286.6 437.6,286.7 436.0,285.3 434.4,286.1 432.8,284.1 431.2,285.0 429.6,284.6 428.0,282.7 426.4,281.5 424.8,281.7 423.2,281.6 421.5,281.4 419.9,282.9 418.3,283.8 416.7,287.0 415.1,287.0 413.5,287.0 411.9,285.8 410.3,286.9 408.7,286.0 407.1,283.9 405.5,283.2 403.9,282.5 402.3,280.0 400.7,280.0 399.1,281.0 397.5,280.6 395.9,280.2 394.3,280.5 392.7,281.1 391.1,282.2 389.5,284.2 387.9,282.9 386.3,283.5 384.7,281.9 383.1,281.5 381.5,282.3 379.9,285.4 378.3,285.0 376.7,284.5 375.1,283.3 373.5,283.1 371.9,287.0 370.3,285.6 368.7,284.1 367.0,284.2 365.4,284.9 363.8,287.0 362.2,282.2 360.6,284.4 359.0,283.1 357.4,282.7 355.8,282.8 354.2,280.3 352.6,280.8 351.0,280.2 349.4,280.8 347.8,281.0 346.2,281.8 344.6,281.5 343.0,281.3 341.4,281.4 339.8,281.3 338.2,282.7 336.6,281.8 335.0,283.5 333.4,283.5 331.8,282.3 330.2,284.9 328.6,284.9 327.0,287.0 325.4,287.0 323.8,282.4 322.2,282.4 320.6,281.9 319.0,282.8 317.4,283.0 315.8,281.9 314.2,281.7 312.6,281.8 310.9,282.3 309.3,282.7 307.7,282.9 306.1,282.0 304.5,281.9 302.9,281.2 301.3,281.4 299.7,282.5 298.1,284.6 296.5,283.2 294.9,282.0 293.3,283.0 291.7,282.3 290.1,283.2 288.5,283.6 286.9,283.4 285.3,282.3 283.7,282.9 282.1,283.5 280.5,284.5 278.9,284.0 277.3,283.4 275.7,283.2 274.1,284.3 272.5,283.2 270.9,283.1 269.3,283.7 267.7,284.5 266.1,283.6 264.5,281.8 262.9,282.9 261.3,284.0 259.7,284.0 258.1,283.6 256.5,284.0 254.8,282.9 253.2,283.0 251.6,283.2 250.0,284.4 248.4,284.7 246.8,285.1 245.2,283.4 243.6,284.1 242.0,283.9 240.4,283.5 238.8,282.2 237.2,282.1 235.6,281.3 234.0,281.5 232.4,281.0 230.8,282.0 229.2,282.3 227.6,282.6 226.0,279.4 224.4,283.0 222.8,280.4 221.2,280.3 219.6,279.8 218.0,279.1 216.4,279.1 214.8,281.4 213.2,278.7 211.6,281.1 210.0,282.9 208.4,282.8 206.8,282.5 205.2,283.1 203.6,282.3 202.0,283.5 200.4,282.5 198.7,279.5 197.1,281.1 195.5,281.4 193.9,280.6 192.3,280.2 190.7,281.7 189.1,282.7 187.5,281.9 185.9,282.4 184.3,281.8 182.7,283.3 181.1,283.1 179.5,282.8 177.9,283.1 176.3,283.4 174.7,282.2 173.1,280.8 171.5,282.0 169.9,286.4 168.3,284.6 166.7,283.1 165.1,282.3 163.5,282.5 161.9,283.8 160.3,283.9 158.7,282.7 157.1,283.8 155.5,282.8 153.9,282.9 152.3,282.7 150.7,283.3 149.1,283.4 147.5,283.8 145.9,283.7 144.3,283.8 142.6,283.9 141.0,284.8 139.4,285.6 137.8,284.0 136.2,284.5 134.6,285.4 133.0,284.4 131.4,284.2 129.8,284.2 128.2,284.0 126.6,283.8 125.0,283.7 123.4,284.7 121.8,283.1 120.2,282.3 118.6,284.0 117.0,283.7 115.4,282.4 113.8,282.5 112.2,282.6 110.6,286.1 109.0,285.0 107.4,284.6 105.8,282.9 104.2,281.2 102.6,281.5 101.0,280.7 99.4,278.0 97.8,278.6 96.2,279.9 94.6,281.6 93.0,281.5 91.4,280.7 89.8,281.7 88.1,285.6 86.5,283.5 84.9,284.3 83.3,284.6 81.7,282.9 80.1,282.2 78.5,282.8 76.9,282.2 75.3,282.8 73.7,283.0 72.1,281.9 70.5,282.0 68.9,279.3 67.3,279.4 65.7,279.9 64.1,278.0 62.5,278.0 60.9,279.7 59.3,279.5 57.7,279.9 56.1,279.6 54.5,281.6 52.9,283.2 51.3,282.2 49.7,281.9 48.1,282.5 46.5,282.0 44.9,281.1 43.3,280.4 41.7,281.1 40.1,281.6 38.5,280.7 36.9,280.2 35.3,279.6 33.7,280.0 32.0,278.0 30.4,278.0 28.8,278.1 27.2,279.6 25.6,283.7 24.0,282.2 22.4,281.9 20.8,282.1 19.2,282.6 17.6,283.4 16.0,283.2 14.4,283.5 12.8,282.4 11.2,285.3 9.6,282.6 8.0,282.1 6.4,279.1 3.7,282.5 4.8,280.9 4.3,279.3 4.2,277.7 5.2,276.1 3.9,274.5 4.1,272.9 5.1,271.3 5.0,269.6 5.4,268.0 2.4,266.4 4.1,264.8 5.4,263.2 5.2,261.6 5.8,260.0 6.2,258.4 4.7,256.8 4.8,255.2 4.9,253.6 4.2,252.0 8.1,250.4 7.5,248.8 7.3,247.1 7.1,245.5 7.1,243.9 6.9,242.3 6.5,240.7 7.5,239.1 7.4,237.5 6.3,235.9 6.5,234.3 5.7,232.7 3.6,231.1 3.0,229.5 3.7,227.9 7.6,226.3 7.6,224.7 7.3,223.0 5.2,221.4 4.9,219.8 0.8,218.2 2.3,216.6 1.9,215.0 3.6,213.4 3.6,211.8 4.5,210.2 8.0,208.6 7.0,207.0 6.5,205.4 5.3,203.8 5.0,202.2 6.1,200.5 4.8,198.9 4.9,197.3 5.3,195.7 6.1,194.1 5.8,192.5 4.3,190.9 4.7,189.3 4.5,187.7 3.8,186.1 4.4,184.5 4.4,182.9 5.8,181.3 5.2,179.7 4.6,178.0 5.8,176.4 6.5,174.8 6.4,173.2 5.6,171.6 5.6,170.0 4.7,168.4 5.2,166.8 5.0,165.2 5.9,163.6 4.2,162.0 3.8,160.4 4.8,158.8 4.7,157.2 5.5,155.6 5.9,153.9 5.0,152.3 4.6,150.7 4.7,149.1 4.6,147.5 5.4,145.9 5.9,144.3 2.1,142.7 2.8,141.1 3.5,139.5 4.2,137.9 3.9,136.3 3.6,134.7 2.6,133.1 3.7,131.4 2.3,129.8 2.0,128.2 2.8,126.6 7.1,125.0 5.7,123.4 6.8,121.8 8.5,120.2 6.9,118.6 2.6,117.0 3.3,115.4 5.0,113.8 4.4,112.2 4.7,110.6 3.9,109.0 4.0,107.3 4.2,105.7 0.3,104.1 1.0,102.5 2.2,100.9 2.0,99.3 3.1,97.7 3.5,96.1 3.9,94.5 4.3,92.9 4.3,91.3 4.0,89.7 5.1,88.1 5.4,86.5 4.2,84.8 4.6,83.2 4.4,81.6 4.8,80.0 6.2,78.4 5.4,76.8 4.7,75.2 3.8,73.6 4.5,72.0 4.2,70.4 4.5,68.8 5.6,67.2 5.4,65.6 4.8,64.0 3.7,62.3 3.1,60.7 3.4,59.1 8.2,57.5 6.8,55.9 8.8,54.3 7.8,52.7 7.0,51.1 2.9,49.5 1.2,47.9 2.4,46.3 3.0,44.7 2.6,43.1 3.0,41.5 3.4,39.9 3.7,38.2 4.6,36.6 3.5,35.0 4.5,33.4 1.4,31.8 2.5,30.2 3.1,28.6 2.2,27.0 2.9,25.4 4.4,23.8 7.3,22.2 5.7,20.6 4.7,19.0 4.2,17.4 3.9,15.7 2.9,14.1 4.4,12.5 3.6,10.9 3.6,9.3 1.6,7.7 2.1,6.1" fill="none" stroke="#4e3f1a" stroke-width="36" filter="url(#blur12)" opacity="0.32"/>
   <polygon points="4.8,3.5 6.4,3.5 8.0,6.1 9.6,1.4 11.2,4.5 12.8,6.4 14.4,4.8 16.0,4.3 17.6,0.7 19.2,1.6 20.8,3.1 22.4,2.2 24.0,1.7 25.6,1.8 27.2,1.8 28.8,3.0 30.4,2.4 32.0,3.7 33.7,3.5 35.3,2.2 36.9,1.7 38.5,2.2 40.1,3.1 41.7,4.1 43.3,4.0 44.9,4.3 46.5,4.4 48.1,7.4 49.7,5.9 51.3,6.7 52.9,5.0 54.5,4.9 56.1,3.9 57.7,5.0 59.3,4.9 60.9,5.1 62.5,5.7 64.1,4.1 65.7,2.6 67.3,0.0 68.9,1.4 70.5,1.0 72.1,2.9 73.7,2.1 75.3,2.9 76.9,3.5 78.5,4.0 80.1,4.7 81.7,5.5 83.3,8.2 84.9,6.9 86.5,6.1 88.1,6.3 89.8,4.7 91.4,4.1 93.0,5.5 94.6,4.4 96.2,5.0 97.8,3.3 99.4,2.6 101.0,4.2 102.6,1.3 104.2,3.1 105.8,4.0 107.4,5.5 109.0,6.2 110.6,4.5 112.2,5.6 113.8,6.7 115.4,2.5 117.0,2.5 118.6,4.0 120.2,3.4 121.8,4.5 123.4,9.0 125.0,8.8 126.6,5.8 128.2,5.0 129.8,5.2 131.4,5.4 133.0,5.0 134.6,4.1 136.2,3.4 137.8,3.9 139.4,4.2 141.0,4.4 142.6,4.5 144.3,5.4 145.9,5.1 147.5,3.5 149.1,4.3 150.7,0.0 152.3,1.3 153.9,2.0 155.5,3.4 157.1,3.2 158.7,3.8 160.3,3.1 161.9,3.3 163.5,3.7 165.1,3.4 166.7,6.6 168.3,9.0 169.9,9.0 171.5,8.0 173.1,6.4 174.7,6.6 176.3,4.5 177.9,3.9 179.5,2.5 181.1,3.9 182.7,4.0 184.3,3.8 185.9,4.6 187.5,4.1 189.1,4.7 190.7,2.9 192.3,3.7 193.9,4.1 195.5,4.4 197.1,4.4 198.7,3.5 200.4,3.1 202.0,7.7 203.6,6.8 205.2,7.3 206.8,5.6 208.4,3.9 210.0,5.1 211.6,5.4 213.2,7.3 214.8,9.0 216.4,7.8 218.0,3.3 219.6,4.4 221.2,5.2 222.8,8.7 224.4,6.7 226.0,6.7 227.6,6.5 229.2,6.5 230.8,4.6 232.4,4.9 234.0,5.0 235.6,3.5 237.2,3.9 238.8,3.2 240.4,2.3 242.0,2.4 243.6,3.4 245.2,4.3 246.8,2.2 248.4,3.6 250.0,3.6 251.6,3.4 253.2,4.3 254.8,5.1 256.5,6.7 258.1,6.8 259.7,5.6 261.3,5.1 262.9,4.8 264.5,5.2 266.1,5.8 267.7,1.9 269.3,2.8 270.9,5.1 272.5,2.7 274.1,3.3 275.7,5.0 277.3,4.8 278.9,3.5 280.5,4.7 282.1,4.5 283.7,5.4 285.3,5.7 286.9,5.9 288.5,5.7 290.1,5.9 291.7,9.0 293.3,6.8 294.9,5.9 296.5,3.7 298.1,4.6 299.7,4.1 301.3,4.2 302.9,4.1 304.5,4.7 306.1,4.9 307.7,4.1 309.3,4.3 310.9,4.6 312.6,2.7 314.2,3.2 315.8,8.4 317.4,7.6 319.0,6.1 320.6,6.7 322.2,5.0 323.8,5.3 325.4,5.7 327.0,3.0 328.6,4.2 330.2,3.5 331.8,0.4 333.4,5.7 335.0,4.7 336.6,4.4 338.2,3.7 339.8,2.7 341.4,2.1 343.0,2.2 344.6,3.4 346.2,2.3 347.8,2.1 349.4,3.1 351.0,2.8 352.6,3.1 354.2,3.6 355.8,3.6 357.4,2.1 359.0,3.0 360.6,3.6 362.2,2.3 363.8,2.7 365.4,2.4 367.0,4.1 368.7,6.5 370.3,6.3 371.9,6.0 373.5,4.1 375.1,4.7 376.7,7.6 378.3,6.2 379.9,2.5 381.5,2.8 383.1,3.8 384.7,3.7 386.3,4.0 387.9,3.0 389.5,3.5 391.1,5.0 392.7,8.2 394.3,7.5 395.9,6.1 397.5,4.5 399.1,5.4 400.7,1.5 402.3,3.3 403.9,2.3 405.5,2.5 407.1,3.8 408.7,3.2 410.3,2.7 411.9,2.2 413.5,6.3 415.1,5.0 416.7,9.0 418.3,7.8 419.9,2.6 421.5,3.9 423.2,4.4 424.8,4.2 426.4,3.6 428.0,2.8 429.6,5.3 431.2,1.4 432.8,4.4 434.4,4.0 436.0,3.2 437.6,6.1 439.2,5.6 440.8,4.9 442.4,4.8 444.0,3.2 445.6,0.8 447.2,6.3 448.8,4.9 450.4,3.2 452.0,4.2 453.6,7.3 455.2,3.4 456.8,4.1 458.4,3.8 460.0,4.5 461.6,3.2 463.2,2.9 464.8,3.9 466.4,3.6 468.0,4.7 469.6,3.8 471.2,3.8 472.8,4.6 474.4,4.6 476.0,5.4 477.6,4.3 479.3,4.5 480.9,3.0 482.5,6.9 484.1,2.7 485.7,3.5 487.3,3.4 488.9,3.1 490.5,3.1 492.1,4.2 493.7,5.4 495.3,5.1 496.9,3.8 498.5,4.8 500.1,1.8 501.7,3.4 503.3,8.1 504.9,6.6 503.4,4.5 503.4,6.1 504.4,7.7 505.4,9.3 504.1,10.9 504.6,12.5 504.6,14.1 506.7,15.7 506.8,17.4 505.7,19.0 502.0,20.6 502.3,22.2 503.2,23.8 503.6,25.4 505.2,27.0 506.0,28.6 502.1,30.2 502.3,31.8 503.3,33.4 503.2,35.0 504.4,36.6 504.2,38.2 505.2,39.9 504.4,41.5 505.0,43.1 502.0,44.7 503.4,46.3 507.3,47.9 508.5,49.5 506.9,51.1 508.1,52.7 508.5,54.3 508.1,55.9 509.0,57.5 508.8,59.1 504.0,60.7 504.1,62.3 505.5,64.0 504.5,65.6 502.0,67.2 502.0,68.8 502.0,70.4 506.5,72.0 502.0,73.6 502.0,75.2 502.0,76.8 502.1,78.4 503.6,80.0 504.9,81.6 505.7,83.2 508.9,84.8 507.3,86.5 507.3,88.1 505.6,89.7 504.8,91.3 505.8,92.9 505.5,94.5 506.4,96.1 506.4,97.7 502.9,99.3 503.3,100.9 503.3,102.5 502.9,104.1 504.0,105.7 504.3,107.3 505.5,109.0 505.5,110.6 506.2,112.2 505.6,113.8 509.5,115.4 508.8,117.0 509.2,118.6 509.8,120.2 508.7,121.8 508.0,123.4 507.5,125.0 506.4,126.6 506.0,128.2 506.9,129.8 510.5,131.4 509.8,133.1 508.9,134.7 509.4,136.3 509.3,137.9 508.9,139.5 508.9,141.1 508.8,142.7 510.9,144.3 510.1,145.9 511.0,147.5 511.0,149.1 509.0,150.7 507.8,152.3 507.9,153.9 506.9,155.6 506.1,157.2 506.5,158.8 506.8,160.4 506.3,162.0 507.3,163.6 506.7,165.2 505.4,166.8 506.3,168.4 505.5,170.0 507.3,171.6 507.5,173.2 506.7,174.8 506.9,176.4 506.4,178.0 507.7,179.7 508.7,181.3 508.5,182.9 508.6,184.5 509.1,186.1 509.7,187.7 508.9,189.3 507.7,190.9 507.0,192.5 506.9,194.1 507.5,195.7 507.9,197.3 506.9,198.9 507.9,200.5 508.3,202.2 507.9,203.8 511.0,205.4 510.3,207.0 510.2,208.6 511.0,210.2 511.0,211.8 508.7,213.4 507.5,215.0 507.5,216.6 507.1,218.2 506.4,219.8 509.2,221.4 508.1,223.0 506.7,224.7 505.3,226.3 506.1,227.9 505.9,229.5 504.8,231.1 505.1,232.7 506.7,234.3 503.7,235.9 504.5,237.5 504.2,239.1 507.5,240.7 507.6,242.3 506.4,243.9 506.2,245.5 506.9,247.1 505.4,248.8 505.0,250.4 502.9,252.0 505.0,253.6 504.9,255.2 505.1,256.8 504.9,258.4 504.2,260.0 506.0,261.6 505.4,263.2 507.2,264.8 506.0,266.4 503.0,268.0 505.3,269.6 504.5,271.3 505.0,272.9 506.5,274.5 507.2,276.1 506.7,277.7 507.1,279.3 504.3,280.9 506.5,286.0 504.9,286.2 503.3,284.8 501.7,284.3 500.1,283.4 498.5,283.7 496.9,283.6 495.3,283.3 493.7,283.8 492.1,284.6 490.5,282.9 488.9,284.1 487.3,283.3 485.7,282.8 484.1,282.0 482.5,283.2 480.9,282.0 479.3,281.8 477.6,282.5 476.0,282.8 474.4,282.6 472.8,284.1 471.2,283.1 469.6,286.5 468.0,285.8 466.4,284.9 464.8,284.6 463.2,283.4 461.6,283.4 460.0,283.0 458.4,281.5 456.8,280.7 455.2,280.6 453.6,278.7 452.0,280.3 450.4,281.8 448.8,281.5 447.2,280.9 445.6,282.3 444.0,280.7 442.4,281.2 440.8,282.7 439.2,286.6 437.6,286.7 436.0,285.3 434.4,286.1 432.8,284.1 431.2,285.0 429.6,284.6 428.0,282.7 426.4,281.5 424.8,281.7 423.2,281.6 421.5,281.4 419.9,282.9 418.3,283.8 416.7,287.0 415.1,287.0 413.5,287.0 411.9,285.8 410.3,286.9 408.7,286.0 407.1,283.9 405.5,283.2 403.9,282.5 402.3,280.0 400.7,280.0 399.1,281.0 397.5,280.6 395.9,280.2 394.3,280.5 392.7,281.1 391.1,282.2 389.5,284.2 387.9,282.9 386.3,283.5 384.7,281.9 383.1,281.5 381.5,282.3 379.9,285.4 378.3,285.0 376.7,284.5 375.1,283.3 373.5,283.1 371.9,287.0 370.3,285.6 368.7,284.1 367.0,284.2 365.4,284.9 363.8,287.0 362.2,282.2 360.6,284.4 359.0,283.1 357.4,282.7 355.8,282.8 354.2,280.3 352.6,280.8 351.0,280.2 349.4,280.8 347.8,281.0 346.2,281.8 344.6,281.5 343.0,281.3 341.4,281.4 339.8,281.3 338.2,282.7 336.6,281.8 335.0,283.5 333.4,283.5 331.8,282.3 330.2,284.9 328.6,284.9 327.0,287.0 325.4,287.0 323.8,282.4 322.2,282.4 320.6,281.9 319.0,282.8 317.4,283.0 315.8,281.9 314.2,281.7 312.6,281.8 310.9,282.3 309.3,282.7 307.7,282.9 306.1,282.0 304.5,281.9 302.9,281.2 301.3,281.4 299.7,282.5 298.1,284.6 296.5,283.2 294.9,282.0 293.3,283.0 291.7,282.3 290.1,283.2 288.5,283.6 286.9,283.4 285.3,282.3 283.7,282.9 282.1,283.5 280.5,284.5 278.9,284.0 277.3,283.4 275.7,283.2 274.1,284.3 272.5,283.2 270.9,283.1 269.3,283.7 267.7,284.5 266.1,283.6 264.5,281.8 262.9,282.9 261.3,284.0 259.7,284.0 258.1,283.6 256.5,284.0 254.8,282.9 253.2,283.0 251.6,283.2 250.0,284.4 248.4,284.7 246.8,285.1 245.2,283.4 243.6,284.1 242.0,283.9 240.4,283.5 238.8,282.2 237.2,282.1 235.6,281.3 234.0,281.5 232.4,281.0 230.8,282.0 229.2,282.3 227.6,282.6 226.0,279.4 224.4,283.0 222.8,280.4 221.2,280.3 219.6,279.8 218.0,279.1 216.4,279.1 214.8,281.4 213.2,278.7 211.6,281.1 210.0,282.9 208.4,282.8 206.8,282.5 205.2,283.1 203.6,282.3 202.0,283.5 200.4,282.5 198.7,279.5 197.1,281.1 195.5,281.4 193.9,280.6 192.3,280.2 190.7,281.7 189.1,282.7 187.5,281.9 185.9,282.4 184.3,281.8 182.7,283.3 181.1,283.1 179.5,282.8 177.9,283.1 176.3,283.4 174.7,282.2 173.1,280.8 171.5,282.0 169.9,286.4 168.3,284.6 166.7,283.1 165.1,282.3 163.5,282.5 161.9,283.8 160.3,283.9 158.7,282.7 157.1,283.8 155.5,282.8 153.9,282.9 152.3,282.7 150.7,283.3 149.1,283.4 147.5,283.8 145.9,283.7 144.3,283.8 142.6,283.9 141.0,284.8 139.4,285.6 137.8,284.0 136.2,284.5 134.6,285.4 133.0,284.4 131.4,284.2 129.8,284.2 128.2,284.0 126.6,283.8 125.0,283.7 123.4,284.7 121.8,283.1 120.2,282.3 118.6,284.0 117.0,283.7 115.4,282.4 113.8,282.5 112.2,282.6 110.6,286.1 109.0,285.0 107.4,284.6 105.8,282.9 104.2,281.2 102.6,281.5 101.0,280.7 99.4,278.0 97.8,278.6 96.2,279.9 94.6,281.6 93.0,281.5 91.4,280.7 89.8,281.7 88.1,285.6 86.5,283.5 84.9,284.3 83.3,284.6 81.7,282.9 80.1,282.2 78.5,282.8 76.9,282.2 75.3,282.8 73.7,283.0 72.1,281.9 70.5,282.0 68.9,279.3 67.3,279.4 65.7,279.9 64.1,278.0 62.5,278.0 60.9,279.7 59.3,279.5 57.7,279.9 56.1,279.6 54.5,281.6 52.9,283.2 51.3,282.2 49.7,281.9 48.1,282.5 46.5,282.0 44.9,281.1 43.3,280.4 41.7,281.1 40.1,281.6 38.5,280.7 36.9,280.2 35.3,279.6 33.7,280.0 32.0,278.0 30.4,278.0 28.8,278.1 27.2,279.6 25.6,283.7 24.0,282.2 22.4,281.9 20.8,282.1 19.2,282.6 17.6,283.4 16.0,283.2 14.4,283.5 12.8,282.4 11.2,285.3 9.6,282.6 8.0,282.1 6.4,279.1 3.7,282.5 4.8,280.9 4.3,279.3 4.2,277.7 5.2,276.1 3.9,274.5 4.1,272.9 5.1,271.3 5.0,269.6 5.4,268.0 2.4,266.4 4.1,264.8 5.4,263.2 5.2,261.6 5.8,260.0 6.2,258.4 4.7,256.8 4.8,255.2 4.9,253.6 4.2,252.0 8.1,250.4 7.5,248.8 7.3,247.1 7.1,245.5 7.1,243.9 6.9,242.3 6.5,240.7 7.5,239.1 7.4,237.5 6.3,235.9 6.5,234.3 5.7,232.7 3.6,231.1 3.0,229.5 3.7,227.9 7.6,226.3 7.6,224.7 7.3,223.0 5.2,221.4 4.9,219.8 0.8,218.2 2.3,216.6 1.9,215.0 3.6,213.4 3.6,211.8 4.5,210.2 8.0,208.6 7.0,207.0 6.5,205.4 5.3,203.8 5.0,202.2 6.1,200.5 4.8,198.9 4.9,197.3 5.3,195.7 6.1,194.1 5.8,192.5 4.3,190.9 4.7,189.3 4.5,187.7 3.8,186.1 4.4,184.5 4.4,182.9 5.8,181.3 5.2,179.7 4.6,178.0 5.8,176.4 6.5,174.8 6.4,173.2 5.6,171.6 5.6,170.0 4.7,168.4 5.2,166.8 5.0,165.2 5.9,163.6 4.2,162.0 3.8,160.4 4.8,158.8 4.7,157.2 5.5,155.6 5.9,153.9 5.0,152.3 4.6,150.7 4.7,149.1 4.6,147.5 5.4,145.9 5.9,144.3 2.1,142.7 2.8,141.1 3.5,139.5 4.2,137.9 3.9,136.3 3.6,134.7 2.6,133.1 3.7,131.4 2.3,129.8 2.0,128.2 2.8,126.6 7.1,125.0 5.7,123.4 6.8,121.8 8.5,120.2 6.9,118.6 2.6,117.0 3.3,115.4 5.0,113.8 4.4,112.2 4.7,110.6 3.9,109.0 4.0,107.3 4.2,105.7 0.3,104.1 1.0,102.5 2.2,100.9 2.0,99.3 3.1,97.7 3.5,96.1 3.9,94.5 4.3,92.9 4.3,91.3 4.0,89.7 5.1,88.1 5.4,86.5 4.2,84.8 4.6,83.2 4.4,81.6 4.8,80.0 6.2,78.4 5.4,76.8 4.7,75.2 3.8,73.6 4.5,72.0 4.2,70.4 4.5,68.8 5.6,67.2 5.4,65.6 4.8,64.0 3.7,62.3 3.1,60.7 3.4,59.1 8.2,57.5 6.8,55.9 8.8,54.3 7.8,52.7 7.0,51.1 2.9,49.5 1.2,47.9 2.4,46.3 3.0,44.7 2.6,43.1 3.0,41.5 3.4,39.9 3.7,38.2 4.6,36.6 3.5,35.0 4.5,33.4 1.4,31.8 2.5,30.2 3.1,28.6 2.2,27.0 2.9,25.4 4.4,23.8 7.3,22.2 5.7,20.6 4.7,19.0 4.2,17.4 3.9,15.7 2.9,14.1 4.4,12.5 3.6,10.9 3.6,9.3 1.6,7.7 2.1,6.1" fill="none" stroke="#473817" stroke-width="14" filter="url(#blur4)" opacity="0.42"/>
   <polygon points="4.8,3.5 6.4,3.5 8.0,6.1 9.6,1.4 11.2,4.5 12.8,6.4 14.4,4.8 16.0,4.3 17.6,0.7 19.2,1.6 20.8,3.1 22.4,2.2 24.0,1.7 25.6,1.8 27.2,1.8 28.8,3.0 30.4,2.4 32.0,3.7 33.7,3.5 35.3,2.2 36.9,1.7 38.5,2.2 40.1,3.1 41.7,4.1 43.3,4.0 44.9,4.3 46.5,4.4 48.1,7.4 49.7,5.9 51.3,6.7 52.9,5.0 54.5,4.9 56.1,3.9 57.7,5.0 59.3,4.9 60.9,5.1 62.5,5.7 64.1,4.1 65.7,2.6 67.3,0.0 68.9,1.4 70.5,1.0 72.1,2.9 73.7,2.1 75.3,2.9 76.9,3.5 78.5,4.0 80.1,4.7 81.7,5.5 83.3,8.2 84.9,6.9 86.5,6.1 88.1,6.3 89.8,4.7 91.4,4.1 93.0,5.5 94.6,4.4 96.2,5.0 97.8,3.3 99.4,2.6 101.0,4.2 102.6,1.3 104.2,3.1 105.8,4.0 107.4,5.5 109.0,6.2 110.6,4.5 112.2,5.6 113.8,6.7 115.4,2.5 117.0,2.5 118.6,4.0 120.2,3.4 121.8,4.5 123.4,9.0 125.0,8.8 126.6,5.8 128.2,5.0 129.8,5.2 131.4,5.4 133.0,5.0 134.6,4.1 136.2,3.4 137.8,3.9 139.4,4.2 141.0,4.4 142.6,4.5 144.3,5.4 145.9,5.1 147.5,3.5 149.1,4.3 150.7,0.0 152.3,1.3 153.9,2.0 155.5,3.4 157.1,3.2 158.7,3.8 160.3,3.1 161.9,3.3 163.5,3.7 165.1,3.4 166.7,6.6 168.3,9.0 169.9,9.0 171.5,8.0 173.1,6.4 174.7,6.6 176.3,4.5 177.9,3.9 179.5,2.5 181.1,3.9 182.7,4.0 184.3,3.8 185.9,4.6 187.5,4.1 189.1,4.7 190.7,2.9 192.3,3.7 193.9,4.1 195.5,4.4 197.1,4.4 198.7,3.5 200.4,3.1 202.0,7.7 203.6,6.8 205.2,7.3 206.8,5.6 208.4,3.9 210.0,5.1 211.6,5.4 213.2,7.3 214.8,9.0 216.4,7.8 218.0,3.3 219.6,4.4 221.2,5.2 222.8,8.7 224.4,6.7 226.0,6.7 227.6,6.5 229.2,6.5 230.8,4.6 232.4,4.9 234.0,5.0 235.6,3.5 237.2,3.9 238.8,3.2 240.4,2.3 242.0,2.4 243.6,3.4 245.2,4.3 246.8,2.2 248.4,3.6 250.0,3.6 251.6,3.4 253.2,4.3 254.8,5.1 256.5,6.7 258.1,6.8 259.7,5.6 261.3,5.1 262.9,4.8 264.5,5.2 266.1,5.8 267.7,1.9 269.3,2.8 270.9,5.1 272.5,2.7 274.1,3.3 275.7,5.0 277.3,4.8 278.9,3.5 280.5,4.7 282.1,4.5 283.7,5.4 285.3,5.7 286.9,5.9 288.5,5.7 290.1,5.9 291.7,9.0 293.3,6.8 294.9,5.9 296.5,3.7 298.1,4.6 299.7,4.1 301.3,4.2 302.9,4.1 304.5,4.7 306.1,4.9 307.7,4.1 309.3,4.3 310.9,4.6 312.6,2.7 314.2,3.2 315.8,8.4 317.4,7.6 319.0,6.1 320.6,6.7 322.2,5.0 323.8,5.3 325.4,5.7 327.0,3.0 328.6,4.2 330.2,3.5 331.8,0.4 333.4,5.7 335.0,4.7 336.6,4.4 338.2,3.7 339.8,2.7 341.4,2.1 343.0,2.2 344.6,3.4 346.2,2.3 347.8,2.1 349.4,3.1 351.0,2.8 352.6,3.1 354.2,3.6 355.8,3.6 357.4,2.1 359.0,3.0 360.6,3.6 362.2,2.3 363.8,2.7 365.4,2.4 367.0,4.1 368.7,6.5 370.3,6.3 371.9,6.0 373.5,4.1 375.1,4.7 376.7,7.6 378.3,6.2 379.9,2.5 381.5,2.8 383.1,3.8 384.7,3.7 386.3,4.0 387.9,3.0 389.5,3.5 391.1,5.0 392.7,8.2 394.3,7.5 395.9,6.1 397.5,4.5 399.1,5.4 400.7,1.5 402.3,3.3 403.9,2.3 405.5,2.5 407.1,3.8 408.7,3.2 410.3,2.7 411.9,2.2 413.5,6.3 415.1,5.0 416.7,9.0 418.3,7.8 419.9,2.6 421.5,3.9 423.2,4.4 424.8,4.2 426.4,3.6 428.0,2.8 429.6,5.3 431.2,1.4 432.8,4.4 434.4,4.0 436.0,3.2 437.6,6.1 439.2,5.6 440.8,4.9 442.4,4.8 444.0,3.2 445.6,0.8 447.2,6.3 448.8,4.9 450.4,3.2 452.0,4.2 453.6,7.3 455.2,3.4 456.8,4.1 458.4,3.8 460.0,4.5 461.6,3.2 463.2,2.9 464.8,3.9 466.4,3.6 468.0,4.7 469.6,3.8 471.2,3.8 472.8,4.6 474.4,4.6 476.0,5.4 477.6,4.3 479.3,4.5 480.9,3.0 482.5,6.9 484.1,2.7 485.7,3.5 487.3,3.4 488.9,3.1 490.5,3.1 492.1,4.2 493.7,5.4 495.3,5.1 496.9,3.8 498.5,4.8 500.1,1.8 501.7,3.4 503.3,8.1 504.9,6.6 503.4,4.5 503.4,6.1 504.4,7.7 505.4,9.3 504.1,10.9 504.6,12.5 504.6,14.1 506.7,15.7 506.8,17.4 505.7,19.0 502.0,20.6 502.3,22.2 503.2,23.8 503.6,25.4 505.2,27.0 506.0,28.6 502.1,30.2 502.3,31.8 503.3,33.4 503.2,35.0 504.4,36.6 504.2,38.2 505.2,39.9 504.4,41.5 505.0,43.1 502.0,44.7 503.4,46.3 507.3,47.9 508.5,49.5 506.9,51.1 508.1,52.7 508.5,54.3 508.1,55.9 509.0,57.5 508.8,59.1 504.0,60.7 504.1,62.3 505.5,64.0 504.5,65.6 502.0,67.2 502.0,68.8 502.0,70.4 506.5,72.0 502.0,73.6 502.0,75.2 502.0,76.8 502.1,78.4 503.6,80.0 504.9,81.6 505.7,83.2 508.9,84.8 507.3,86.5 507.3,88.1 505.6,89.7 504.8,91.3 505.8,92.9 505.5,94.5 506.4,96.1 506.4,97.7 502.9,99.3 503.3,100.9 503.3,102.5 502.9,104.1 504.0,105.7 504.3,107.3 505.5,109.0 505.5,110.6 506.2,112.2 505.6,113.8 509.5,115.4 508.8,117.0 509.2,118.6 509.8,120.2 508.7,121.8 508.0,123.4 507.5,125.0 506.4,126.6 506.0,128.2 506.9,129.8 510.5,131.4 509.8,133.1 508.9,134.7 509.4,136.3 509.3,137.9 508.9,139.5 508.9,141.1 508.8,142.7 510.9,144.3 510.1,145.9 511.0,147.5 511.0,149.1 509.0,150.7 507.8,152.3 507.9,153.9 506.9,155.6 506.1,157.2 506.5,158.8 506.8,160.4 506.3,162.0 507.3,163.6 506.7,165.2 505.4,166.8 506.3,168.4 505.5,170.0 507.3,171.6 507.5,173.2 506.7,174.8 506.9,176.4 506.4,178.0 507.7,179.7 508.7,181.3 508.5,182.9 508.6,184.5 509.1,186.1 509.7,187.7 508.9,189.3 507.7,190.9 507.0,192.5 506.9,194.1 507.5,195.7 507.9,197.3 506.9,198.9 507.9,200.5 508.3,202.2 507.9,203.8 511.0,205.4 510.3,207.0 510.2,208.6 511.0,210.2 511.0,211.8 508.7,213.4 507.5,215.0 507.5,216.6 507.1,218.2 506.4,219.8 509.2,221.4 508.1,223.0 506.7,224.7 505.3,226.3 506.1,227.9 505.9,229.5 504.8,231.1 505.1,232.7 506.7,234.3 503.7,235.9 504.5,237.5 504.2,239.1 507.5,240.7 507.6,242.3 506.4,243.9 506.2,245.5 506.9,247.1 505.4,248.8 505.0,250.4 502.9,252.0 505.0,253.6 504.9,255.2 505.1,256.8 504.9,258.4 504.2,260.0 506.0,261.6 505.4,263.2 507.2,264.8 506.0,266.4 503.0,268.0 505.3,269.6 504.5,271.3 505.0,272.9 506.5,274.5 507.2,276.1 506.7,277.7 507.1,279.3 504.3,280.9 506.5,286.0 504.9,286.2 503.3,284.8 501.7,284.3 500.1,283.4 498.5,283.7 496.9,283.6 495.3,283.3 493.7,283.8 492.1,284.6 490.5,282.9 488.9,284.1 487.3,283.3 485.7,282.8 484.1,282.0 482.5,283.2 480.9,282.0 479.3,281.8 477.6,282.5 476.0,282.8 474.4,282.6 472.8,284.1 471.2,283.1 469.6,286.5 468.0,285.8 466.4,284.9 464.8,284.6 463.2,283.4 461.6,283.4 460.0,283.0 458.4,281.5 456.8,280.7 455.2,280.6 453.6,278.7 452.0,280.3 450.4,281.8 448.8,281.5 447.2,280.9 445.6,282.3 444.0,280.7 442.4,281.2 440.8,282.7 439.2,286.6 437.6,286.7 436.0,285.3 434.4,286.1 432.8,284.1 431.2,285.0 429.6,284.6 428.0,282.7 426.4,281.5 424.8,281.7 423.2,281.6 421.5,281.4 419.9,282.9 418.3,283.8 416.7,287.0 415.1,287.0 413.5,287.0 411.9,285.8 410.3,286.9 408.7,286.0 407.1,283.9 405.5,283.2 403.9,282.5 402.3,280.0 400.7,280.0 399.1,281.0 397.5,280.6 395.9,280.2 394.3,280.5 392.7,281.1 391.1,282.2 389.5,284.2 387.9,282.9 386.3,283.5 384.7,281.9 383.1,281.5 381.5,282.3 379.9,285.4 378.3,285.0 376.7,284.5 375.1,283.3 373.5,283.1 371.9,287.0 370.3,285.6 368.7,284.1 367.0,284.2 365.4,284.9 363.8,287.0 362.2,282.2 360.6,284.4 359.0,283.1 357.4,282.7 355.8,282.8 354.2,280.3 352.6,280.8 351.0,280.2 349.4,280.8 347.8,281.0 346.2,281.8 344.6,281.5 343.0,281.3 341.4,281.4 339.8,281.3 338.2,282.7 336.6,281.8 335.0,283.5 333.4,283.5 331.8,282.3 330.2,284.9 328.6,284.9 327.0,287.0 325.4,287.0 323.8,282.4 322.2,282.4 320.6,281.9 319.0,282.8 317.4,283.0 315.8,281.9 314.2,281.7 312.6,281.8 310.9,282.3 309.3,282.7 307.7,282.9 306.1,282.0 304.5,281.9 302.9,281.2 301.3,281.4 299.7,282.5 298.1,284.6 296.5,283.2 294.9,282.0 293.3,283.0 291.7,282.3 290.1,283.2 288.5,283.6 286.9,283.4 285.3,282.3 283.7,282.9 282.1,283.5 280.5,284.5 278.9,284.0 277.3,283.4 275.7,283.2 274.1,284.3 272.5,283.2 270.9,283.1 269.3,283.7 267.7,284.5 266.1,283.6 264.5,281.8 262.9,282.9 261.3,284.0 259.7,284.0 258.1,283.6 256.5,284.0 254.8,282.9 253.2,283.0 251.6,283.2 250.0,284.4 248.4,284.7 246.8,285.1 245.2,283.4 243.6,284.1 242.0,283.9 240.4,283.5 238.8,282.2 237.2,282.1 235.6,281.3 234.0,281.5 232.4,281.0 230.8,282.0 229.2,282.3 227.6,282.6 226.0,279.4 224.4,283.0 222.8,280.4 221.2,280.3 219.6,279.8 218.0,279.1 216.4,279.1 214.8,281.4 213.2,278.7 211.6,281.1 210.0,282.9 208.4,282.8 206.8,282.5 205.2,283.1 203.6,282.3 202.0,283.5 200.4,282.5 198.7,279.5 197.1,281.1 195.5,281.4 193.9,280.6 192.3,280.2 190.7,281.7 189.1,282.7 187.5,281.9 185.9,282.4 184.3,281.8 182.7,283.3 181.1,283.1 179.5,282.8 177.9,283.1 176.3,283.4 174.7,282.2 173.1,280.8 171.5,282.0 169.9,286.4 168.3,284.6 166.7,283.1 165.1,282.3 163.5,282.5 161.9,283.8 160.3,283.9 158.7,282.7 157.1,283.8 155.5,282.8 153.9,282.9 152.3,282.7 150.7,283.3 149.1,283.4 147.5,283.8 145.9,283.7 144.3,283.8 142.6,283.9 141.0,284.8 139.4,285.6 137.8,284.0 136.2,284.5 134.6,285.4 133.0,284.4 131.4,284.2 129.8,284.2 128.2,284.0 126.6,283.8 125.0,283.7 123.4,284.7 121.8,283.1 120.2,282.3 118.6,284.0 117.0,283.7 115.4,282.4 113.8,282.5 112.2,282.6 110.6,286.1 109.0,285.0 107.4,284.6 105.8,282.9 104.2,281.2 102.6,281.5 101.0,280.7 99.4,278.0 97.8,278.6 96.2,279.9 94.6,281.6 93.0,281.5 91.4,280.7 89.8,281.7 88.1,285.6 86.5,283.5 84.9,284.3 83.3,284.6 81.7,282.9 80.1,282.2 78.5,282.8 76.9,282.2 75.3,282.8 73.7,283.0 72.1,281.9 70.5,282.0 68.9,279.3 67.3,279.4 65.7,279.9 64.1,278.0 62.5,278.0 60.9,279.7 59.3,279.5 57.7,279.9 56.1,279.6 54.5,281.6 52.9,283.2 51.3,282.2 49.7,281.9 48.1,282.5 46.5,282.0 44.9,281.1 43.3,280.4 41.7,281.1 40.1,281.6 38.5,280.7 36.9,280.2 35.3,279.6 33.7,280.0 32.0,278.0 30.4,278.0 28.8,278.1 27.2,279.6 25.6,283.7 24.0,282.2 22.4,281.9 20.8,282.1 19.2,282.6 17.6,283.4 16.0,283.2 14.4,283.5 12.8,282.4 11.2,285.3 9.6,282.6 8.0,282.1 6.4,279.1 3.7,282.5 4.8,280.9 4.3,279.3 4.2,277.7 5.2,276.1 3.9,274.5 4.1,272.9 5.1,271.3 5.0,269.6 5.4,268.0 2.4,266.4 4.1,264.8 5.4,263.2 5.2,261.6 5.8,260.0 6.2,258.4 4.7,256.8 4.8,255.2 4.9,253.6 4.2,252.0 8.1,250.4 7.5,248.8 7.3,247.1 7.1,245.5 7.1,243.9 6.9,242.3 6.5,240.7 7.5,239.1 7.4,237.5 6.3,235.9 6.5,234.3 5.7,232.7 3.6,231.1 3.0,229.5 3.7,227.9 7.6,226.3 7.6,224.7 7.3,223.0 5.2,221.4 4.9,219.8 0.8,218.2 2.3,216.6 1.9,215.0 3.6,213.4 3.6,211.8 4.5,210.2 8.0,208.6 7.0,207.0 6.5,205.4 5.3,203.8 5.0,202.2 6.1,200.5 4.8,198.9 4.9,197.3 5.3,195.7 6.1,194.1 5.8,192.5 4.3,190.9 4.7,189.3 4.5,187.7 3.8,186.1 4.4,184.5 4.4,182.9 5.8,181.3 5.2,179.7 4.6,178.0 5.8,176.4 6.5,174.8 6.4,173.2 5.6,171.6 5.6,170.0 4.7,168.4 5.2,166.8 5.0,165.2 5.9,163.6 4.2,162.0 3.8,160.4 4.8,158.8 4.7,157.2 5.5,155.6 5.9,153.9 5.0,152.3 4.6,150.7 4.7,149.1 4.6,147.5 5.4,145.9 5.9,144.3 2.1,142.7 2.8,141.1 3.5,139.5 4.2,137.9 3.9,136.3 3.6,134.7 2.6,133.1 3.7,131.4 2.3,129.8 2.0,128.2 2.8,126.6 7.1,125.0 5.7,123.4 6.8,121.8 8.5,120.2 6.9,118.6 2.6,117.0 3.3,115.4 5.0,113.8 4.4,112.2 4.7,110.6 3.9,109.0 4.0,107.3 4.2,105.7 0.3,104.1 1.0,102.5 2.2,100.9 2.0,99.3 3.1,97.7 3.5,96.1 3.9,94.5 4.3,92.9 4.3,91.3 4.0,89.7 5.1,88.1 5.4,86.5 4.2,84.8 4.6,83.2 4.4,81.6 4.8,80.0 6.2,78.4 5.4,76.8 4.7,75.2 3.8,73.6 4.5,72.0 4.2,70.4 4.5,68.8 5.6,67.2 5.4,65.6 4.8,64.0 3.7,62.3 3.1,60.7 3.4,59.1 8.2,57.5 6.8,55.9 8.8,54.3 7.8,52.7 7.0,51.1 2.9,49.5 1.2,47.9 2.4,46.3 3.0,44.7 2.6,43.1 3.0,41.5 3.4,39.9 3.7,38.2 4.6,36.6 3.5,35.0 4.5,33.4 1.4,31.8 2.5,30.2 3.1,28.6 2.2,27.0 2.9,25.4 4.4,23.8 7.3,22.2 5.7,20.6 4.7,19.0 4.2,17.4 3.9,15.7 2.9,14.1 4.4,12.5 3.6,10.9 3.6,9.3 1.6,7.7 2.1,6.1" fill="none" stroke="#42341a" stroke-width="5" filter="url(#blur1)" opacity="0.38"/>
   <!-- coast shading -->
   <g filter="url(#blur3)" fill="#2e220a" opacity="0.7" stroke="#2e220a" stroke-width="6" stroke-linejoin="round">
    <polygon points="306.8,93.1 308.6,95.0 310.2,95.0 312.9,95.8 314.7,95.7 314.4,98.7 314.2,100.9 314.8,102.0 315.7,104.4 317.1,105.8 315.4,107.4 314.3,108.3 311.7,111.3 310.0,112.6 308.6,112.0 306.8,114.7 307.2,115.0 304.5,115.2 303.0,116.6 299.2,115.8 299.4,117.5 298.7,119.9 296.3,122.3 296.9,124.6 296.9,127.7 298.1,129.6 298.5,131.6 301.1,132.7 298.0,134.8 298.3,136.5 297.0,138.2 295.3,140.9 293.7,142.1 291.4,143.7 291.1,145.9 292.6,147.8 292.9,147.9 293.8,150.5 295.4,152.4 295.3,153.5 297.7,155.8 297.8,156.8 295.6,158.5 296.0,161.0 293.2,162.5 290.9,161.9 291.0,161.6 289.0,162.5 285.1,161.9 284.5,163.0 283.6,164.2 282.1,165.7 279.0,167.3 277.5,168.2 277.5,169.3 275.2,169.0 273.3,170.2 271.5,171.3 269.3,172.8 266.9,173.9 264.5,173.2 264.3,173.9 262.2,175.5 260.3,175.4 258.4,178.6 257.5,179.3 256.8,179.8 255.1,181.3 253.8,183.4 251.8,184.0 249.9,185.1 247.2,186.2 246.8,187.8 244.5,185.6 242.3,185.4 241.0,184.1 239.8,181.8 239.0,180.1 236.9,178.3 236.3,177.8 235.1,177.1 233.6,174.8 233.0,173.3 231.9,171.3 228.0,170.0 226.9,171.4 223.3,170.3 222.7,171.8 219.9,172.8 218.1,174.0 214.8,173.6 213.3,171.9 210.3,171.0 209.4,171.7 205.8,170.7 203.5,170.1 201.8,171.2 201.7,173.4 199.5,173.1 197.8,172.2 197.7,170.6 196.1,167.8 195.0,167.2 194.3,163.5 193.2,162.0 192.7,161.3 194.6,158.7 194.2,156.9 197.0,155.5 197.6,153.8 198.7,151.7 199.7,152.7 202.3,153.3 203.0,154.1 205.4,154.3 206.2,154.6 209.5,153.3 211.6,152.8 212.1,152.9 214.1,152.6 217.5,152.7 219.1,151.3 221.4,151.4 223.2,150.9 225.0,146.7 225.0,145.7 228.2,143.4 229.2,143.0 231.2,140.0 232.0,138.9 232.7,139.4 235.0,137.8 236.6,135.9 237.6,134.6 240.5,133.8 240.9,131.3 243.1,133.0 245.8,133.3 248.2,130.8 249.4,129.3 251.3,128.2 251.6,128.6 253.4,128.2 256.1,130.4 257.6,131.2 258.6,132.7 260.4,133.0 261.5,132.9 262.8,130.7 263.8,128.4 267.2,127.5 268.3,125.5 268.8,123.9 270.8,124.2 272.2,121.9 273.9,121.3 274.1,117.7 274.8,116.8 276.3,114.9 277.2,114.0 278.1,112.2 280.3,111.5 280.3,108.1 281.8,105.3 281.8,104.6 281.6,102.0 284.0,102.6 285.8,101.9 286.2,100.5 288.4,101.5 292.0,99.0 293.3,99.2 294.0,98.0 297.5,97.8 298.8,96.9 301.1,95.2 303.7,95.4"/><polygon points="59.9,135.6 61.7,134.2 64.1,134.3 65.4,132.9 66.2,133.0 69.3,133.2 70.2,131.6 72.4,132.8 73.5,132.3 73.8,133.3 73.8,135.1 74.7,138.2 76.1,138.5 75.4,141.8 75.7,142.4 76.7,143.8 76.8,146.2 78.6,148.7 80.0,148.4 82.8,150.2 84.2,151.9 84.9,153.4 84.4,156.3 85.8,158.0 87.0,160.5 87.3,161.8 89.6,164.2 89.4,166.5 89.3,168.9 88.9,171.1 90.0,172.2 88.6,172.6 85.1,172.7 85.0,172.2 84.4,169.7 83.9,167.3 82.1,166.5 81.7,165.8 79.4,165.4 77.1,165.1 76.0,163.9 73.4,164.8 71.5,163.5 70.7,164.2 68.5,166.6 67.7,167.6 66.0,170.1 65.6,173.6 63.9,173.9 60.8,173.4 58.7,174.7 57.1,177.3 56.4,178.1 55.4,181.4 54.3,183.7 53.1,183.8 50.8,183.9 48.8,183.3 47.7,182.6 46.7,179.9 44.9,178.7 45.6,176.2 44.9,174.1 45.2,172.9 47.5,171.0 46.8,168.7 47.0,167.4 48.4,164.0 49.8,162.6 49.9,160.8 51.1,160.1 52.7,157.2 53.5,155.5 53.2,154.6 54.2,152.1 55.5,150.0 56.5,147.9 57.1,147.0 57.0,143.4 58.0,141.3 58.0,140.3 57.6,138.9 59.5,137.0"/><polygon points="25.0,179.8 27.3,179.5 29.7,180.4 31.8,180.4 33.6,181.4 35.7,181.9 38.3,182.9 40.0,185.3 40.7,186.9 38.3,188.9 36.3,190.5 34.8,191.0 32.4,190.8 30.6,190.9 28.5,189.3 27.5,187.7 26.8,185.2 26.3,182.5"/><polygon points="-0.5,215.0 0.5,215.1 3.9,216.6 5.6,215.9 6.8,215.8 9.2,217.6 10.4,215.9 12.0,216.7 15.5,218.2 16.7,217.4 18.1,218.2 20.4,220.5 21.7,223.1 22.3,224.0 23.3,225.0 22.3,227.9 23.6,229.3 23.6,231.0 26.6,233.5 28.5,235.0 29.2,235.6 31.0,237.0 33.9,236.9 34.2,238.3 35.7,240.7 35.0,243.7 34.3,242.6 30.6,243.0 29.4,240.9 26.9,241.4 25.9,240.4 23.3,239.1 20.7,240.3 19.2,238.5 17.7,238.3 15.1,238.8 14.7,237.4 13.8,235.3 11.3,234.2 10.0,231.9 9.6,230.9 9.0,228.7 7.7,228.2 5.6,226.6 4.7,227.0 1.3,225.8 0.0,225.2 -1.2,224.3 -0.3,222.1 -0.5,218.9 -1.8,218.8"/><polygon points="36.8,249.4 39.4,247.4 41.3,250.0 42.4,253.2 40.6,254.2 38.5,254.7 37.3,252.5"/><polygon points="41.5,270.6 44.6,269.6 47.3,269.3 48.4,271.3 50.0,274.0 48.7,275.4 47.3,277.9 45.2,276.9 43.0,275.9 42.6,272.7"/>
   </g>
   <g stroke="#0e0903" stroke-width="1.15" stroke-linejoin="round">
    <polygon points="306.8,93.1 308.6,95.0 310.2,95.0 312.9,95.8 314.7,95.7 314.4,98.7 314.2,100.9 314.8,102.0 315.7,104.4 317.1,105.8 315.4,107.4 314.3,108.3 311.7,111.3 310.0,112.6 308.6,112.0 306.8,114.7 307.2,115.0 304.5,115.2 303.0,116.6 299.2,115.8 299.4,117.5 298.7,119.9 296.3,122.3 296.9,124.6 296.9,127.7 298.1,129.6 298.5,131.6 301.1,132.7 298.0,134.8 298.3,136.5 297.0,138.2 295.3,140.9 293.7,142.1 291.4,143.7 291.1,145.9 292.6,147.8 292.9,147.9 293.8,150.5 295.4,152.4 295.3,153.5 297.7,155.8 297.8,156.8 295.6,158.5 296.0,161.0 293.2,162.5 290.9,161.9 291.0,161.6 289.0,162.5 285.1,161.9 284.5,163.0 283.6,164.2 282.1,165.7 279.0,167.3 277.5,168.2 277.5,169.3 275.2,169.0 273.3,170.2 271.5,171.3 269.3,172.8 266.9,173.9 264.5,173.2 264.3,173.9 262.2,175.5 260.3,175.4 258.4,178.6 257.5,179.3 256.8,179.8 255.1,181.3 253.8,183.4 251.8,184.0 249.9,185.1 247.2,186.2 246.8,187.8 244.5,185.6 242.3,185.4 241.0,184.1 239.8,181.8 239.0,180.1 236.9,178.3 236.3,177.8 235.1,177.1 233.6,174.8 233.0,173.3 231.9,171.3 228.0,170.0 226.9,171.4 223.3,170.3 222.7,171.8 219.9,172.8 218.1,174.0 214.8,173.6 213.3,171.9 210.3,171.0 209.4,171.7 205.8,170.7 203.5,170.1 201.8,171.2 201.7,173.4 199.5,173.1 197.8,172.2 197.7,170.6 196.1,167.8 195.0,167.2 194.3,163.5 193.2,162.0 192.7,161.3 194.6,158.7 194.2,156.9 197.0,155.5 197.6,153.8 198.7,151.7 199.7,152.7 202.3,153.3 203.0,154.1 205.4,154.3 206.2,154.6 209.5,153.3 211.6,152.8 212.1,152.9 214.1,152.6 217.5,152.7 219.1,151.3 221.4,151.4 223.2,150.9 225.0,146.7 225.0,145.7 228.2,143.4 229.2,143.0 231.2,140.0 232.0,138.9 232.7,139.4 235.0,137.8 236.6,135.9 237.6,134.6 240.5,133.8 240.9,131.3 243.1,133.0 245.8,133.3 248.2,130.8 249.4,129.3 251.3,128.2 251.6,128.6 253.4,128.2 256.1,130.4 257.6,131.2 258.6,132.7 260.4,133.0 261.5,132.9 262.8,130.7 263.8,128.4 267.2,127.5 268.3,125.5 268.8,123.9 270.8,124.2 272.2,121.9 273.9,121.3 274.1,117.7 274.8,116.8 276.3,114.9 277.2,114.0 278.1,112.2 280.3,111.5 280.3,108.1 281.8,105.3 281.8,104.6 281.6,102.0 284.0,102.6 285.8,101.9 286.2,100.5 288.4,101.5 292.0,99.0 293.3,99.2 294.0,98.0 297.5,97.8 298.8,96.9 301.1,95.2 303.7,95.4" fill="#b99b6a"/>
    <polygon points="231.3,170.8 224.3,170.0 218.2,173.1 211.2,171.6 204.3,170.8 198.8,173.1 195.8,168.5 192.7,162.3 195.0,156.1 198.1,151.5 203.5,153.0 208.9,153.8 216.6,152.3 222.8,150.0 229.0,152.3 233.6,159.2 235.1,165.4 232.1,170.8" fill="#a17d5b" stroke="none"/>
    <polygon points="59.9,135.6 61.7,134.2 64.1,134.3 65.4,132.9 66.2,133.0 69.3,133.2 70.2,131.6 72.4,132.8 73.5,132.3 73.8,133.3 73.8,135.1 74.7,138.2 76.1,138.5 75.4,141.8 75.7,142.4 76.7,143.8 76.8,146.2 78.6,148.7 80.0,148.4 82.8,150.2 84.2,151.9 84.9,153.4 84.4,156.3 85.8,158.0 87.0,160.5 87.3,161.8 89.6,164.2 89.4,166.5 89.3,168.9 88.9,171.1 90.0,172.2 88.6,172.6 85.1,172.7 85.0,172.2 84.4,169.7 83.9,167.3 82.1,166.5 81.7,165.8 79.4,165.4 77.1,165.1 76.0,163.9 73.4,164.8 71.5,163.5 70.7,164.2 68.5,166.6 67.7,167.6 66.0,170.1 65.6,173.6 63.9,173.9 60.8,173.4 58.7,174.7 57.1,177.3 56.4,178.1 55.4,181.4 54.3,183.7 53.1,183.8 50.8,183.9 48.8,183.3 47.7,182.6 46.7,179.9 44.9,178.7 45.6,176.2 44.9,174.1 45.2,172.9 47.5,171.0 46.8,168.7 47.0,167.4 48.4,164.0 49.8,162.6 49.9,160.8 51.1,160.1 52.7,157.2 53.5,155.5 53.2,154.6 54.2,152.1 55.5,150.0 56.5,147.9 57.1,147.0 57.0,143.4 58.0,141.3 58.0,140.3 57.6,138.9 59.5,137.0" fill="#9a7555"/>
    <polygon points="25.0,179.8 27.3,179.5 29.7,180.4 31.8,180.4 33.6,181.4 35.7,181.9 38.3,182.9 40.0,185.3 40.7,186.9 38.3,188.9 36.3,190.5 34.8,191.0 32.4,190.8 30.6,190.9 28.5,189.3 27.5,187.7 26.8,185.2 26.3,182.5" fill="#9a7555"/>
    <polygon points="-0.5,215.0 0.5,215.1 3.9,216.6 5.6,215.9 6.8,215.8 9.2,217.6 10.4,215.9 12.0,216.7 15.5,218.2 16.7,217.4 18.1,218.2 20.4,220.5 21.7,223.1 22.3,224.0 23.3,225.0 22.3,227.9 23.6,229.3 23.6,231.0 26.6,233.5 28.5,235.0 29.2,235.6 31.0,237.0 33.9,236.9 34.2,238.3 35.7,240.7 35.0,243.7 34.3,242.6 30.6,243.0 29.4,240.9 26.9,241.4 25.9,240.4 23.3,239.1 20.7,240.3 19.2,238.5 17.7,238.3 15.1,238.8 14.7,237.4 13.8,235.3 11.3,234.2 10.0,231.9 9.6,230.9 9.0,228.7 7.7,228.2 5.6,226.6 4.7,227.0 1.3,225.8 0.0,225.2 -1.2,224.3 -0.3,222.1 -0.5,218.9 -1.8,218.8" fill="#9a7555"/>
    <polygon points="36.8,249.4 39.4,247.4 41.3,250.0 42.4,253.2 40.6,254.2 38.5,254.7 37.3,252.5" fill="#9a7555"/>
    <polygon points="41.5,270.6 44.6,269.6 47.3,269.3 48.4,271.3 50.0,274.0 48.7,275.4 47.3,277.9 45.2,276.9 43.0,275.9 42.6,272.7" fill="#9a7555"/>
   </g>
   <clipPath id="cmain"><polygon points="306.8,93.1 308.6,95.0 310.2,95.0 312.9,95.8 314.7,95.7 314.4,98.7 314.2,100.9 314.8,102.0 315.7,104.4 317.1,105.8 315.4,107.4 314.3,108.3 311.7,111.3 310.0,112.6 308.6,112.0 306.8,114.7 307.2,115.0 304.5,115.2 303.0,116.6 299.2,115.8 299.4,117.5 298.7,119.9 296.3,122.3 296.9,124.6 296.9,127.7 298.1,129.6 298.5,131.6 301.1,132.7 298.0,134.8 298.3,136.5 297.0,138.2 295.3,140.9 293.7,142.1 291.4,143.7 291.1,145.9 292.6,147.8 292.9,147.9 293.8,150.5 295.4,152.4 295.3,153.5 297.7,155.8 297.8,156.8 295.6,158.5 296.0,161.0 293.2,162.5 290.9,161.9 291.0,161.6 289.0,162.5 285.1,161.9 284.5,163.0 283.6,164.2 282.1,165.7 279.0,167.3 277.5,168.2 277.5,169.3 275.2,169.0 273.3,170.2 271.5,171.3 269.3,172.8 266.9,173.9 264.5,173.2 264.3,173.9 262.2,175.5 260.3,175.4 258.4,178.6 257.5,179.3 256.8,179.8 255.1,181.3 253.8,183.4 251.8,184.0 249.9,185.1 247.2,186.2 246.8,187.8 244.5,185.6 242.3,185.4 241.0,184.1 239.8,181.8 239.0,180.1 236.9,178.3 236.3,177.8 235.1,177.1 233.6,174.8 233.0,173.3 231.9,171.3 228.0,170.0 226.9,171.4 223.3,170.3 222.7,171.8 219.9,172.8 218.1,174.0 214.8,173.6 213.3,171.9 210.3,171.0 209.4,171.7 205.8,170.7 203.5,170.1 201.8,171.2 201.7,173.4 199.5,173.1 197.8,172.2 197.7,170.6 196.1,167.8 195.0,167.2 194.3,163.5 193.2,162.0 192.7,161.3 194.6,158.7 194.2,156.9 197.0,155.5 197.6,153.8 198.7,151.7 199.7,152.7 202.3,153.3 203.0,154.1 205.4,154.3 206.2,154.6 209.5,153.3 211.6,152.8 212.1,152.9 214.1,152.6 217.5,152.7 219.1,151.3 221.4,151.4 223.2,150.9 225.0,146.7 225.0,145.7 228.2,143.4 229.2,143.0 231.2,140.0 232.0,138.9 232.7,139.4 235.0,137.8 236.6,135.9 237.6,134.6 240.5,133.8 240.9,131.3 243.1,133.0 245.8,133.3 248.2,130.8 249.4,129.3 251.3,128.2 251.6,128.6 253.4,128.2 256.1,130.4 257.6,131.2 258.6,132.7 260.4,133.0 261.5,132.9 262.8,130.7 263.8,128.4 267.2,127.5 268.3,125.5 268.8,123.9 270.8,124.2 272.2,121.9 273.9,121.3 274.1,117.7 274.8,116.8 276.3,114.9 277.2,114.0 278.1,112.2 280.3,111.5 280.3,108.1 281.8,105.3 281.8,104.6 281.6,102.0 284.0,102.6 285.8,101.9 286.2,100.5 288.4,101.5 292.0,99.0 293.3,99.2 294.0,98.0 297.5,97.8 298.8,96.9 301.1,95.2 303.7,95.4"/></clipPath>
   <clipPath id="ca"><polygon points="59.9,135.6 61.7,134.2 64.1,134.3 65.4,132.9 66.2,133.0 69.3,133.2 70.2,131.6 72.4,132.8 73.5,132.3 73.8,133.3 73.8,135.1 74.7,138.2 76.1,138.5 75.4,141.8 75.7,142.4 76.7,143.8 76.8,146.2 78.6,148.7 80.0,148.4 82.8,150.2 84.2,151.9 84.9,153.4 84.4,156.3 85.8,158.0 87.0,160.5 87.3,161.8 89.6,164.2 89.4,166.5 89.3,168.9 88.9,171.1 90.0,172.2 88.6,172.6 85.1,172.7 85.0,172.2 84.4,169.7 83.9,167.3 82.1,166.5 81.7,165.8 79.4,165.4 77.1,165.1 76.0,163.9 73.4,164.8 71.5,163.5 70.7,164.2 68.5,166.6 67.7,167.6 66.0,170.1 65.6,173.6 63.9,173.9 60.8,173.4 58.7,174.7 57.1,177.3 56.4,178.1 55.4,181.4 54.3,183.7 53.1,183.8 50.8,183.9 48.8,183.3 47.7,182.6 46.7,179.9 44.9,178.7 45.6,176.2 44.9,174.1 45.2,172.9 47.5,171.0 46.8,168.7 47.0,167.4 48.4,164.0 49.8,162.6 49.9,160.8 51.1,160.1 52.7,157.2 53.5,155.5 53.2,154.6 54.2,152.1 55.5,150.0 56.5,147.9 57.1,147.0 57.0,143.4 58.0,141.3 58.0,140.3 57.6,138.9 59.5,137.0"/></clipPath>
   <clipPath id="cc"><polygon points="-0.5,215.0 0.5,215.1 3.9,216.6 5.6,215.9 6.8,215.8 9.2,217.6 10.4,215.9 12.0,216.7 15.5,218.2 16.7,217.4 18.1,218.2 20.4,220.5 21.7,223.1 22.3,224.0 23.3,225.0 22.3,227.9 23.6,229.3 23.6,231.0 26.6,233.5 28.5,235.0 29.2,235.6 31.0,237.0 33.9,236.9 34.2,238.3 35.7,240.7 35.0,243.7 34.3,242.6 30.6,243.0 29.4,240.9 26.9,241.4 25.9,240.4 23.3,239.1 20.7,240.3 19.2,238.5 17.7,238.3 15.1,238.8 14.7,237.4 13.8,235.3 11.3,234.2 10.0,231.9 9.6,230.9 9.0,228.7 7.7,228.2 5.6,226.6 4.7,227.0 1.3,225.8 0.0,225.2 -1.2,224.3 -0.3,222.1 -0.5,218.9 -1.8,218.8"/></clipPath>
   <g clip-path="url(#cmain)"><polygon points="306.8,93.1 308.6,95.0 310.2,95.0 312.9,95.8 314.7,95.7 314.4,98.7 314.2,100.9 314.8,102.0 315.7,104.4 317.1,105.8 315.4,107.4 314.3,108.3 311.7,111.3 310.0,112.6 308.6,112.0 306.8,114.7 307.2,115.0 304.5,115.2 303.0,116.6 299.2,115.8 299.4,117.5 298.7,119.9 296.3,122.3 296.9,124.6 296.9,127.7 298.1,129.6 298.5,131.6 301.1,132.7 298.0,134.8 298.3,136.5 297.0,138.2 295.3,140.9 293.7,142.1 291.4,143.7 291.1,145.9 292.6,147.8 292.9,147.9 293.8,150.5 295.4,152.4 295.3,153.5 297.7,155.8 297.8,156.8 295.6,158.5 296.0,161.0 293.2,162.5 290.9,161.9 291.0,161.6 289.0,162.5 285.1,161.9 284.5,163.0 283.6,164.2 282.1,165.7 279.0,167.3 277.5,168.2 277.5,169.3 275.2,169.0 273.3,170.2 271.5,171.3 269.3,172.8 266.9,173.9 264.5,173.2 264.3,173.9 262.2,175.5 260.3,175.4 258.4,178.6 257.5,179.3 256.8,179.8 255.1,181.3 253.8,183.4 251.8,184.0 249.9,185.1 247.2,186.2 246.8,187.8 244.5,185.6 242.3,185.4 241.0,184.1 239.8,181.8 239.0,180.1 236.9,178.3 236.3,177.8 235.1,177.1 233.6,174.8 233.0,173.3 231.9,171.3 228.0,170.0 226.9,171.4 223.3,170.3 222.7,171.8 219.9,172.8 218.1,174.0 214.8,173.6 213.3,171.9 210.3,171.0 209.4,171.7 205.8,170.7 203.5,170.1 201.8,171.2 201.7,173.4 199.5,173.1 197.8,172.2 197.7,170.6 196.1,167.8 195.0,167.2 194.3,163.5 193.2,162.0 192.7,161.3 194.6,158.7 194.2,156.9 197.0,155.5 197.6,153.8 198.7,151.7 199.7,152.7 202.3,153.3 203.0,154.1 205.4,154.3 206.2,154.6 209.5,153.3 211.6,152.8 212.1,152.9 214.1,152.6 217.5,152.7 219.1,151.3 221.4,151.4 223.2,150.9 225.0,146.7 225.0,145.7 228.2,143.4 229.2,143.0 231.2,140.0 232.0,138.9 232.7,139.4 235.0,137.8 236.6,135.9 237.6,134.6 240.5,133.8 240.9,131.3 243.1,133.0 245.8,133.3 248.2,130.8 249.4,129.3 251.3,128.2 251.6,128.6 253.4,128.2 256.1,130.4 257.6,131.2 258.6,132.7 260.4,133.0 261.5,132.9 262.8,130.7 263.8,128.4 267.2,127.5 268.3,125.5 268.8,123.9 270.8,124.2 272.2,121.9 273.9,121.3 274.1,117.7 274.8,116.8 276.3,114.9 277.2,114.0 278.1,112.2 280.3,111.5 280.3,108.1 281.8,105.3 281.8,104.6 281.6,102.0 284.0,102.6 285.8,101.9 286.2,100.5 288.4,101.5 292.0,99.0 293.3,99.2 294.0,98.0 297.5,97.8 298.8,96.9 301.1,95.2 303.7,95.4" fill="none" stroke="#3a2a12" stroke-width="5" filter="url(#blur3)" opacity="0.55"/></g>
   <g clip-path="url(#ca)"><polygon points="59.9,135.6 61.7,134.2 64.1,134.3 65.4,132.9 66.2,133.0 69.3,133.2 70.2,131.6 72.4,132.8 73.5,132.3 73.8,133.3 73.8,135.1 74.7,138.2 76.1,138.5 75.4,141.8 75.7,142.4 76.7,143.8 76.8,146.2 78.6,148.7 80.0,148.4 82.8,150.2 84.2,151.9 84.9,153.4 84.4,156.3 85.8,158.0 87.0,160.5 87.3,161.8 89.6,164.2 89.4,166.5 89.3,168.9 88.9,171.1 90.0,172.2 88.6,172.6 85.1,172.7 85.0,172.2 84.4,169.7 83.9,167.3 82.1,166.5 81.7,165.8 79.4,165.4 77.1,165.1 76.0,163.9 73.4,164.8 71.5,163.5 70.7,164.2 68.5,166.6 67.7,167.6 66.0,170.1 65.6,173.6 63.9,173.9 60.8,173.4 58.7,174.7 57.1,177.3 56.4,178.1 55.4,181.4 54.3,183.7 53.1,183.8 50.8,183.9 48.8,183.3 47.7,182.6 46.7,179.9 44.9,178.7 45.6,176.2 44.9,174.1 45.2,172.9 47.5,171.0 46.8,168.7 47.0,167.4 48.4,164.0 49.8,162.6 49.9,160.8 51.1,160.1 52.7,157.2 53.5,155.5 53.2,154.6 54.2,152.1 55.5,150.0 56.5,147.9 57.1,147.0 57.0,143.4 58.0,141.3 58.0,140.3 57.6,138.9 59.5,137.0" fill="none" stroke="#3a2a12" stroke-width="4" filter="url(#blur3)" opacity="0.5"/></g>
   <g clip-path="url(#cc)"><polygon points="-0.5,215.0 0.5,215.1 3.9,216.6 5.6,215.9 6.8,215.8 9.2,217.6 10.4,215.9 12.0,216.7 15.5,218.2 16.7,217.4 18.1,218.2 20.4,220.5 21.7,223.1 22.3,224.0 23.3,225.0 22.3,227.9 23.6,229.3 23.6,231.0 26.6,233.5 28.5,235.0 29.2,235.6 31.0,237.0 33.9,236.9 34.2,238.3 35.7,240.7 35.0,243.7 34.3,242.6 30.6,243.0 29.4,240.9 26.9,241.4 25.9,240.4 23.3,239.1 20.7,240.3 19.2,238.5 17.7,238.3 15.1,238.8 14.7,237.4 13.8,235.3 11.3,234.2 10.0,231.9 9.6,230.9 9.0,228.7 7.7,228.2 5.6,226.6 4.7,227.0 1.3,225.8 0.0,225.2 -1.2,224.3 -0.3,222.1 -0.5,218.9 -1.8,218.8" fill="none" stroke="#3a2a12" stroke-width="4" filter="url(#blur3)" opacity="0.5"/></g>
   <g fill="#4a3a22" opacity="0.45"><path d="M240.0 166.9 l1.1 -3 l1.1 3z" /><path d="M253.8 157.5 l1.1 -3 l1.1 3z" /><path d="M241.5 171.6 l1.1 -3 l1.1 3z" /><path d="M258.8 159.0 l1.1 -3 l1.1 3z" /><path d="M250.0 146.6 l1.1 -3 l1.1 3z" /><path d="M252.3 139.2 l1.1 -3 l1.1 3z" /><path d="M258.4 146.5 l1.1 -3 l1.1 3z" /><path d="M242.0 138.0 l1.1 -3 l1.1 3z" /><path d="M264.4 169.1 l1.1 -3 l1.1 3z" /><path d="M260.8 163.6 l1.1 -3 l1.1 3z" /><path d="M236.1 150.8 l1.1 -3 l1.1 3z" /><path d="M249.7 141.2 l1.1 -3 l1.1 3z" /><path d="M263.1 152.6 l1.1 -3 l1.1 3z" /><path d="M239.7 172.7 l1.1 -3 l1.1 3z" /><path d="M238.8 177.6 l1.1 -3 l1.1 3z" /><path d="M248.4 160.8 l1.1 -3 l1.1 3z" /><path d="M245.2 157.8 l1.1 -3 l1.1 3z" /><path d="M240.6 137.7 l1.1 -3 l1.1 3z" /><path d="M260.6 146.6 l1.1 -3 l1.1 3z" /><path d="M258.0 145.4 l1.1 -3 l1.1 3z" /><path d="M263.6 176.1 l1.1 -3 l1.1 3z" /><path d="M257.3 170.2 l1.1 -3 l1.1 3z" /><path d="M252.2 168.7 l1.1 -3 l1.1 3z" /><path d="M238.7 157.4 l1.1 -3 l1.1 3z" /><path d="M259.4 145.1 l1.1 -3 l1.1 3z" /><path d="M262.2 175.8 l1.1 -3 l1.1 3z" /><path d="M247.2 152.4 l1.1 -3 l1.1 3z" /><path d="M248.4 153.3 l1.1 -3 l1.1 3z" /><path d="M264.3 153.4 l1.1 -3 l1.1 3z" /><path d="M256.2 180.5 l1.1 -3 l1.1 3z" /><path d="M249.7 158.1 l1.1 -3 l1.1 3z" /><path d="M251.3 169.6 l1.1 -3 l1.1 3z" /><path d="M241.7 163.3 l1.1 -3 l1.1 3z" /><path d="M251.5 163.9 l1.1 -3 l1.1 3z" /><path d="M240.4 143.7 l1.1 -3 l1.1 3z" /><path d="M245.4 177.6 l1.1 -3 l1.1 3z" /><path d="M245.3 162.8 l1.1 -3 l1.1 3z" /><path d="M244.1 140.7 l1.1 -3 l1.1 3z" /><path d="M237.1 172.5 l1.1 -3 l1.1 3z" /><path d="M257.9 152.8 l1.1 -3 l1.1 3z" /><path d="M255.2 166.3 l1.1 -3 l1.1 3z" /><path d="M261.5 179.0 l1.1 -3 l1.1 3z" /><path d="M247.1 180.4 l1.1 -3 l1.1 3z" /><path d="M263.4 162.5 l1.1 -3 l1.1 3z" /><path d="M261.1 158.0 l1.1 -3 l1.1 3z" /><path d="M246.2 147.1 l1.1 -3 l1.1 3z" /><path d="M260.9 143.3 l1.1 -3 l1.1 3z" /><path d="M237.2 172.1 l1.1 -3 l1.1 3z" /><path d="M257.9 157.7 l1.1 -3 l1.1 3z" /><path d="M259.7 138.4 l1.1 -3 l1.1 3z" /><path d="M242.7 149.0 l1.1 -3 l1.1 3z" /><path d="M247.5 143.7 l1.1 -3 l1.1 3z" /><path d="M237.2 151.2 l1.1 -3 l1.1 3z" /><path d="M261.5 180.1 l1.1 -3 l1.1 3z" /><path d="M257.0 157.5 l1.1 -3 l1.1 3z" /><path d="M242.5 179.0 l1.1 -3 l1.1 3z" /><path d="M250.6 168.7 l1.1 -3 l1.1 3z" /><path d="M259.7 171.7 l1.1 -3 l1.1 3z" /><path d="M261.0 163.0 l1.1 -3 l1.1 3z" /><path d="M247.6 162.1 l1.1 -3 l1.1 3z" /><path d="M260.1 149.8 l1.1 -3 l1.1 3z" /><path d="M250.8 148.4 l1.1 -3 l1.1 3z" /><path d="M257.7 136.5 l1.1 -3 l1.1 3z" /><path d="M255.3 178.8 l1.1 -3 l1.1 3z" /><path d="M235.8 162.6 l1.1 -3 l1.1 3z" /><path d="M254.0 174.2 l1.1 -3 l1.1 3z" /><path d="M252.3 147.6 l1.1 -3 l1.1 3z" /><path d="M67.4 160.6 l1.2 -3 l1.2 3z" /><path d="M75.7 151.1 l1.2 -3 l1.2 3z" /><path d="M62.2 150.6 l1.2 -3 l1.2 3z" /><path d="M61.0 154.7 l1.2 -3 l1.2 3z" /><path d="M63.0 159.5 l1.2 -3 l1.2 3z" /><path d="M71.5 151.0 l1.2 -3 l1.2 3z" /><path d="M69.6 153.3 l1.2 -3 l1.2 3z" /><path d="M68.8 152.1 l1.2 -3 l1.2 3z" /></g>
   <g fill="none" stroke="#0e0903" stroke-width="1.15" stroke-linejoin="round">
    <polygon points="306.8,93.1 308.6,95.0 310.2,95.0 312.9,95.8 314.7,95.7 314.4,98.7 314.2,100.9 314.8,102.0 315.7,104.4 317.1,105.8 315.4,107.4 314.3,108.3 311.7,111.3 310.0,112.6 308.6,112.0 306.8,114.7 307.2,115.0 304.5,115.2 303.0,116.6 299.2,115.8 299.4,117.5 298.7,119.9 296.3,122.3 296.9,124.6 296.9,127.7 298.1,129.6 298.5,131.6 301.1,132.7 298.0,134.8 298.3,136.5 297.0,138.2 295.3,140.9 293.7,142.1 291.4,143.7 291.1,145.9 292.6,147.8 292.9,147.9 293.8,150.5 295.4,152.4 295.3,153.5 297.7,155.8 297.8,156.8 295.6,158.5 296.0,161.0 293.2,162.5 290.9,161.9 291.0,161.6 289.0,162.5 285.1,161.9 284.5,163.0 283.6,164.2 282.1,165.7 279.0,167.3 277.5,168.2 277.5,169.3 275.2,169.0 273.3,170.2 271.5,171.3 269.3,172.8 266.9,173.9 264.5,173.2 264.3,173.9 262.2,175.5 260.3,175.4 258.4,178.6 257.5,179.3 256.8,179.8 255.1,181.3 253.8,183.4 251.8,184.0 249.9,185.1 247.2,186.2 246.8,187.8 244.5,185.6 242.3,185.4 241.0,184.1 239.8,181.8 239.0,180.1 236.9,178.3 236.3,177.8 235.1,177.1 233.6,174.8 233.0,173.3 231.9,171.3 228.0,170.0 226.9,171.4 223.3,170.3 222.7,171.8 219.9,172.8 218.1,174.0 214.8,173.6 213.3,171.9 210.3,171.0 209.4,171.7 205.8,170.7 203.5,170.1 201.8,171.2 201.7,173.4 199.5,173.1 197.8,172.2 197.7,170.6 196.1,167.8 195.0,167.2 194.3,163.5 193.2,162.0 192.7,161.3 194.6,158.7 194.2,156.9 197.0,155.5 197.6,153.8 198.7,151.7 199.7,152.7 202.3,153.3 203.0,154.1 205.4,154.3 206.2,154.6 209.5,153.3 211.6,152.8 212.1,152.9 214.1,152.6 217.5,152.7 219.1,151.3 221.4,151.4 223.2,150.9 225.0,146.7 225.0,145.7 228.2,143.4 229.2,143.0 231.2,140.0 232.0,138.9 232.7,139.4 235.0,137.8 236.6,135.9 237.6,134.6 240.5,133.8 240.9,131.3 243.1,133.0 245.8,133.3 248.2,130.8 249.4,129.3 251.3,128.2 251.6,128.6 253.4,128.2 256.1,130.4 257.6,131.2 258.6,132.7 260.4,133.0 261.5,132.9 262.8,130.7 263.8,128.4 267.2,127.5 268.3,125.5 268.8,123.9 270.8,124.2 272.2,121.9 273.9,121.3 274.1,117.7 274.8,116.8 276.3,114.9 277.2,114.0 278.1,112.2 280.3,111.5 280.3,108.1 281.8,105.3 281.8,104.6 281.6,102.0 284.0,102.6 285.8,101.9 286.2,100.5 288.4,101.5 292.0,99.0 293.3,99.2 294.0,98.0 297.5,97.8 298.8,96.9 301.1,95.2 303.7,95.4"/><polygon points="59.9,135.6 61.7,134.2 64.1,134.3 65.4,132.9 66.2,133.0 69.3,133.2 70.2,131.6 72.4,132.8 73.5,132.3 73.8,133.3 73.8,135.1 74.7,138.2 76.1,138.5 75.4,141.8 75.7,142.4 76.7,143.8 76.8,146.2 78.6,148.7 80.0,148.4 82.8,150.2 84.2,151.9 84.9,153.4 84.4,156.3 85.8,158.0 87.0,160.5 87.3,161.8 89.6,164.2 89.4,166.5 89.3,168.9 88.9,171.1 90.0,172.2 88.6,172.6 85.1,172.7 85.0,172.2 84.4,169.7 83.9,167.3 82.1,166.5 81.7,165.8 79.4,165.4 77.1,165.1 76.0,163.9 73.4,164.8 71.5,163.5 70.7,164.2 68.5,166.6 67.7,167.6 66.0,170.1 65.6,173.6 63.9,173.9 60.8,173.4 58.7,174.7 57.1,177.3 56.4,178.1 55.4,181.4 54.3,183.7 53.1,183.8 50.8,183.9 48.8,183.3 47.7,182.6 46.7,179.9 44.9,178.7 45.6,176.2 44.9,174.1 45.2,172.9 47.5,171.0 46.8,168.7 47.0,167.4 48.4,164.0 49.8,162.6 49.9,160.8 51.1,160.1 52.7,157.2 53.5,155.5 53.2,154.6 54.2,152.1 55.5,150.0 56.5,147.9 57.1,147.0 57.0,143.4 58.0,141.3 58.0,140.3 57.6,138.9 59.5,137.0"/><polygon points="-0.5,215.0 0.5,215.1 3.9,216.6 5.6,215.9 6.8,215.8 9.2,217.6 10.4,215.9 12.0,216.7 15.5,218.2 16.7,217.4 18.1,218.2 20.4,220.5 21.7,223.1 22.3,224.0 23.3,225.0 22.3,227.9 23.6,229.3 23.6,231.0 26.6,233.5 28.5,235.0 29.2,235.6 31.0,237.0 33.9,236.9 34.2,238.3 35.7,240.7 35.0,243.7 34.3,242.6 30.6,243.0 29.4,240.9 26.9,241.4 25.9,240.4 23.3,239.1 20.7,240.3 19.2,238.5 17.7,238.3 15.1,238.8 14.7,237.4 13.8,235.3 11.3,234.2 10.0,231.9 9.6,230.9 9.0,228.7 7.7,228.2 5.6,226.6 4.7,227.0 1.3,225.8 0.0,225.2 -1.2,224.3 -0.3,222.1 -0.5,218.9 -1.8,218.8"/>
   </g>
   <g font-family="Liberation Sans, sans-serif" font-weight="bold" font-size="5.7" letter-spacing="0.42">
    <g fill="#efe3b8" stroke="#efe3b8" stroke-width="1.2" opacity="0.55" filter="url(#blur1)">
     <text x="250.5" y="141.8">Kingdom of</text><text x="254.5" y="150.3">Honlegara</text>
     <text x="200.5" y="162.6">Kingdom</text><text x="206" y="171">of Co</text>
    </g>
    <g fill="#0a0703">
     <text x="250.5" y="141.8">Kingdom of</text><text x="254.5" y="150.3">Honlegara</text>
     <text x="200.5" y="162.6">Kingdom</text><text x="206" y="171">of Co</text>
    </g>
   </g>
   <text x="105" y="80" font-family="Liberation Sans, sans-serif" font-size="17" fill="#e8dba8" stroke="#e8dba8" stroke-width="3" opacity="0.6" filter="url(#blur1)">The Land of Sabon</text>
   <text x="105" y="80" font-family="Liberation Sans, sans-serif" font-size="17" fill="#221b0e">The Land of Sabon</text>
  </g>
 </svg>
</div>
</body></html>
